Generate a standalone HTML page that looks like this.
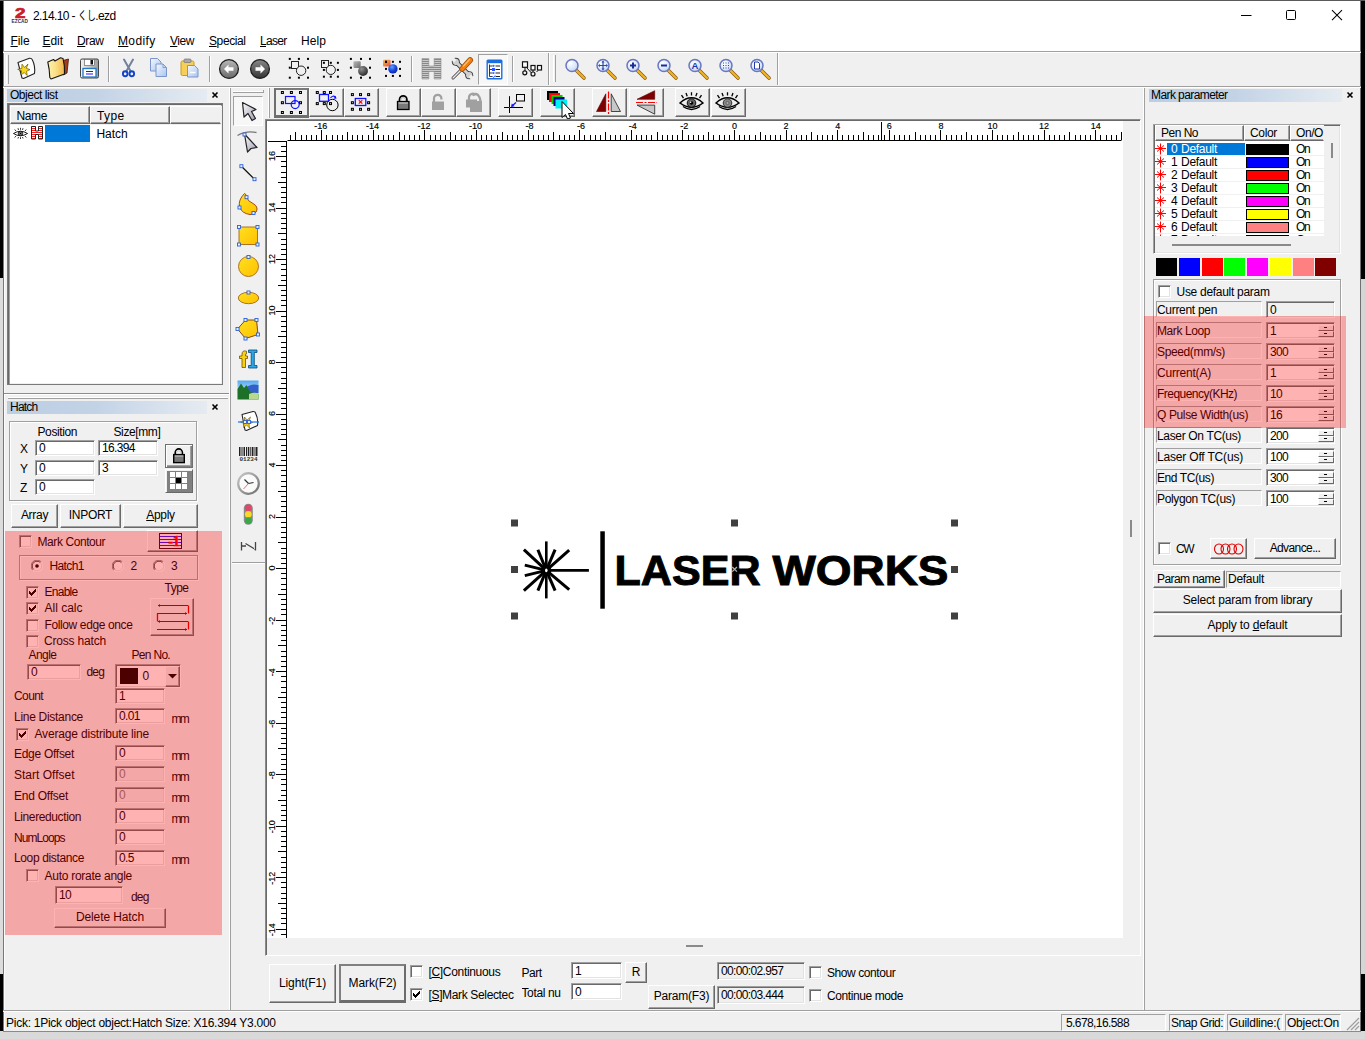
<!DOCTYPE html>
<html><head><meta charset="utf-8"><title>EZCAD</title>
<style>
html,body{margin:0;padding:0;}
body{width:1365px;height:1039px;position:relative;overflow:hidden;background:#f0f0f0;font-family:"Liberation Sans","Noto Sans CJK JP",sans-serif;font-size:12px;color:#000;}
div{position:absolute;box-sizing:border-box;}
.t{white-space:nowrap;line-height:16px;height:16px;}
.btn{background:#f0f0f0;border:1px solid;border-color:#fff #696969 #696969 #fff;box-shadow:inset -1px -1px 0 #a0a0a0;text-align:center;}
.btnp{background:#f0f0f0;border:1px solid;border-color:#696969 #fff #fff #696969;box-shadow:inset 1px 1px 0 #a0a0a0;text-align:center;}
.btnd{background:#f0f0f0;border:2px solid #808080;border-right-color:#6c6c6c;border-bottom:3px solid #6c6c6c;text-align:center;}
.btnd .bl{margin-top:-1px;}
.bl{display:block;white-space:nowrap;}
.ed{border:1px solid;border-color:#a0a0a0 #fff #fff #a0a0a0;box-shadow:inset 1px 1px 0 #696969, inset -1px -1px 0 #e3e3e3;overflow:hidden;white-space:nowrap;}
.ck{width:13px;height:13px;background:#fff;border:1px solid;border-color:#a0a0a0 #fff #fff #a0a0a0;box-shadow:inset 1px 1px 0 #696969, inset -1px -1px 0 #e3e3e3;}
.grp{border:1px solid #a0a0a0;box-shadow:1px 1px 0 #fff, inset 1px 1px 0 #fff;}
.sk{border:1px solid;border-color:#a0a0a0 #fff #fff #a0a0a0;}
.pink{background:rgba(255,0,0,0.3);}
u{text-decoration:underline;text-underline-offset:1px;}
</style></head><body>
<div style="left:0px;top:0px;width:3px;height:278px;background:#000"></div>
<div style="left:0px;top:278px;width:3px;height:696px;background:#dcdcdc"></div>
<div style="left:0px;top:974px;width:3px;height:57px;background:#000"></div>
<div style="left:1361px;top:0px;width:4px;height:279px;background:#000"></div>
<div style="left:1361px;top:279px;width:4px;height:695px;background:#d5d5d5"></div>
<div style="left:1361px;top:974px;width:4px;height:57px;background:#000"></div>
<div style="left:0px;top:1031px;width:1365px;height:8px;background:#d9d9d9"></div>
<div style="left:3px;top:1031px;width:1358px;height:1px;background:#8a8a8a"></div>
<div style="left:3px;top:0px;width:1358px;height:51px;background:#fff"></div>
<div style="left:0px;top:0px;width:1365px;height:1px;background:#5a5a5a"></div>
<div style="left:3px;top:1px;width:1px;height:1030px;background:#787878"></div>
<div style="left:4px;top:52px;width:1px;height:979px;background:#fbfbfb"></div>
<div style="left:1360px;top:1px;width:1px;height:1030px;background:#707070"></div>
<svg style="position:absolute;left:9px;top:5px;" width="22" height="20" viewBox="0 0 22 20"><text x="11.300" y="13" font-family="Liberation Sans" font-weight="bold" font-size="15" fill="#c8202c" stroke="#c8202c" stroke-width=".7" text-anchor="middle" textLength="10.500" lengthAdjust="spacingAndGlyphs">2</text>
<text x="10.800" y="18.300" font-family="Liberation Sans" font-weight="bold" font-size="5" fill="#3a2a4a" text-anchor="middle" textLength="16.500" lengthAdjust="spacingAndGlyphs">EZCAD</text></svg>
<div class="t" style="left:33px;top:7.500px;font-size:12px;letter-spacing:-0.6px">2.14.10 - <span style="display:inline-block;width:17.500px;letter-spacing:0;transform:scaleX(.74);transform-origin:0 50%;vertical-align:top">くし</span>.ezd</div>
<svg style="position:absolute;left:1240px;top:8px;" width="110" height="16" viewBox="0 0 110 16"><path d="M1 7.500h10.500" stroke="#000" stroke-width="1" fill="none"/>
<rect x="46.500" y="2.500" width="9" height="9" rx="1" stroke="#000" stroke-width="1" fill="none"/>
<path d="M92 2.200l10 10M102 2.200L92 12.200" stroke="#000" stroke-width="1.050" fill="none"/></svg>
<div class="t" style="left:10.5px;top:32.5px;letter-spacing:-0.086px"><u>F</u>ile</div>
<div class="t" style="left:42.5px;top:32.5px;letter-spacing:-0.043px"><u>E</u>dit</div>
<div class="t" style="left:77px;top:32.5px;letter-spacing:-0.379px"><u>D</u>raw</div>
<div class="t" style="left:118px;top:32.5px;letter-spacing:0.359px"><u>M</u>odify</div>
<div class="t" style="left:170px;top:32.5px;letter-spacing:-0.449px"><u>V</u>iew</div>
<div class="t" style="left:209px;top:32.5px;letter-spacing:-0.408px"><u>S</u>pecial</div>
<div class="t" style="left:260px;top:32.5px;letter-spacing:-0.703px"><u>L</u>aser</div>
<div class="t" style="left:301px;top:32.5px;letter-spacing:0.078px">Help</div>
<div style="left:3px;top:51px;width:1358px;height:1px;background:#a0a0a0"></div>
<div style="left:3px;top:52px;width:1358px;height:1px;background:#fff"></div>
<div style="left:3px;top:86px;width:1358px;height:1px;background:#a0a0a0"></div>
<div style="left:3px;top:87px;width:1358px;height:1px;background:#fff"></div>
<div style="left:6px;top:55px;width:3px;height:29px;border-left:1px solid #fff;border-right:1px solid #a0a0a0"></div>
<div style="left:108px;top:56px;width:1px;height:26px;background:#a0a0a0"></div>
<div style="left:109px;top:56px;width:1px;height:26px;background:#fff"></div>
<div style="left:209px;top:56px;width:1px;height:26px;background:#a0a0a0"></div>
<div style="left:210px;top:56px;width:1px;height:26px;background:#fff"></div>
<div style="left:411px;top:56px;width:1px;height:26px;background:#a0a0a0"></div>
<div style="left:412px;top:56px;width:1px;height:26px;background:#fff"></div>
<div style="left:512px;top:56px;width:1px;height:26px;background:#a0a0a0"></div>
<div style="left:513px;top:56px;width:1px;height:26px;background:#fff"></div>
<div style="left:548px;top:53px;width:1px;height:32px;background:#a0a0a0"></div>
<div style="left:549px;top:53px;width:1px;height:32px;background:#fff"></div>
<div style="left:553px;top:55px;width:3px;height:27px;border-left:1px solid #fff;border-right:1px solid #a0a0a0"></div>
<div style="left:777px;top:53px;width:1px;height:32px;background:#a0a0a0"></div>
<div style="left:778px;top:53px;width:1px;height:32px;background:#fff"></div>
<svg style="position:absolute;left:15px;top:56px;" width="24" height="25" viewBox="0 0 24 25"><defs><linearGradient id="gy" x1="0" y1="0" x2="1" y2="1"><stop offset="0" stop-color="#fff6a0"/><stop offset="1" stop-color="#e8b800"/></linearGradient></defs>
<path d="M3 6.500 L14.500 2.200 Q16.500 2 17.200 3.500 Q20.500 10 19.500 17.500 L8.500 22.500 L7 22 Z" fill="#fff" stroke="#222" stroke-width="1.100" stroke-linejoin="round"/>
<path d="M13 8 L11.300 12.300 L15 13.600 L11.500 15.300 L12.200 19.500 L9.200 16.500 L6 19 L6.600 14.800 L2.700 13.300 L6.800 12.400 L7 8.200 L9.600 11.500 Z" fill="#f8d818" stroke="#6b5400" stroke-width=".7"/></svg>
<svg style="position:absolute;left:46px;top:56px;" width="25" height="25" viewBox="0 0 25 25"><defs><linearGradient id="gf" x1="0" y1="0" x2="1" y2="0"><stop offset="0" stop-color="#fff3a8"/><stop offset=".45" stop-color="#fbe08a"/><stop offset="1" stop-color="#f3b544"/></linearGradient></defs>
<path d="M17 4.500 L22.500 3 L21 17 L17.500 19Z" fill="#a83c18" stroke="#3a1808" stroke-width=".8"/>
<path d="M1.800 6 L7.500 3.500 L9 5 L14.500 1.800 L17 2.500 Q19 10 18.500 18 L5 23 L3.800 21.500 Q3.500 13 1.800 6Z" fill="url(#gf)" stroke="#151515" stroke-width="1.100" stroke-linejoin="round"/></svg>
<svg style="position:absolute;left:79px;top:57px;" width="22" height="22" viewBox="0 0 22 22"><defs><linearGradient id="gs" x1="0" y1="0" x2="1" y2="0"><stop offset="0" stop-color="#f4f4f4"/><stop offset="1" stop-color="#9a9a9a"/></linearGradient></defs>
<rect x="1.500" y="2" width="18" height="19" rx="1.500" fill="url(#gs)" stroke="#444" stroke-width="1"/>
<rect x="5.500" y="2.500" width="10" height="6" fill="#fff" stroke="#555" stroke-width=".6"/><rect x="11.500" y="3" width="2.500" height="4.500" fill="#111"/>
<rect x="4" y="11.500" width="13" height="8.500" fill="#fff" stroke="#1c78c8" stroke-width="1.300"/><path d="M7 14.500h7M7 17h7" stroke="#2a10ff" stroke-width="1.200"/></svg>
<svg style="position:absolute;left:120px;top:58px;" width="17" height="20" viewBox="0 0 17 20"><path d="M4 1.500 L10.800 13.500M13 1.500 L6.200 13.500" stroke="#70829c" stroke-width="2" stroke-linecap="round"/>
<ellipse cx="5.200" cy="15.800" rx="2.300" ry="2.500" fill="none" stroke="#1444c8" stroke-width="1.900"/><ellipse cx="11.800" cy="15.800" rx="2.300" ry="2.500" fill="none" stroke="#1444c8" stroke-width="1.900"/></svg>
<svg style="position:absolute;left:149px;top:57px;" width="20" height="21" viewBox="0 0 20 21"><defs><linearGradient id="gc" x1="0" y1="0" x2="1" y2="1"><stop offset="0" stop-color="#f4f8ff"/><stop offset="1" stop-color="#a8c4f0"/></linearGradient></defs>
<path d="M1.500 1.500h7l3.500 3.500v9h-10.500z" fill="url(#gc)" stroke="#7c96cc" stroke-width="1"/>
<path d="M7 7h7l3.500 3.500v9h-10.500z" fill="url(#gc)" stroke="#7c96cc" stroke-width="1"/><path d="M14 7v3.500h3.500" fill="none" stroke="#7c96cc" stroke-width=".9"/></svg>
<svg style="position:absolute;left:180px;top:57px;" width="20" height="21" viewBox="0 0 20 21"><rect x="1" y="4" width="13" height="14.500" rx="1.500" fill="#f5cf58" stroke="#c89a20" stroke-width="1"/><rect x="4" y="2" width="7" height="3.500" rx="1" fill="#a8a8a8" stroke="#777" stroke-width=".7"/>
<path d="M7.500 8.500h7l3.500 3.500v8h-10.500z" fill="url(#gc)" stroke="#7c96cc" stroke-width="1"/><path d="M10 15.500h5.500" stroke="#fff" stroke-width="1.400"/></svg>
<svg style="position:absolute;left:218px;top:57.5px;" width="22" height="22" viewBox="0 0 22 22"><defs><linearGradient id="gb0" x1="0" y1="0" x2="0" y2="1"><stop offset="0" stop-color="#b8b8b8"/><stop offset="1" stop-color="#6a6a6a"/></linearGradient></defs>
<circle cx="11" cy="11" r="9.400" fill="url(#gb0)" stroke="#1e1e1e" stroke-width="1.300"/><path d="M6 11 L10.500 6.500 V9.300 H15.500 V12.700 H10.500 V15.500 Z" fill="#fff"/></svg>
<svg style="position:absolute;left:249px;top:57.5px;" width="22" height="22" viewBox="0 0 22 22"><defs><linearGradient id="gb1" x1="0" y1="0" x2="0" y2="1"><stop offset="0" stop-color="#8a8a8a"/><stop offset="1" stop-color="#333"/></linearGradient></defs>
<circle cx="11" cy="11" r="9.400" fill="url(#gb1)" stroke="#1e1e1e" stroke-width="1.300"/><path d="M16 11 L11.500 6.500 V9.300 H6.500 V12.700 H11.500 V15.500 Z" fill="#fff"/></svg>
<svg style="position:absolute;left:286px;top:56px;" width="26" height="25" viewBox="0 0 26 25"><rect x="2.8" y="1.9" width="2" height="2" fill="#000"/><rect x="2.8" y="10.7" width="2" height="2" fill="#000"/><rect x="2.8" y="20.7" width="2" height="2" fill="#000"/><rect x="11.9" y="1.9" width="2" height="2" fill="#000"/><rect x="11.9" y="20.7" width="2" height="2" fill="#000"/><rect x="21.0" y="1.9" width="2" height="2" fill="#000"/><rect x="21.0" y="10.7" width="2" height="2" fill="#000"/><rect x="21.0" y="20.7" width="2" height="2" fill="#000"/><rect x="5.500" y="5.500" width="7" height="7" fill="none" stroke="#222" stroke-width="1"/><circle cx="15.100" cy="14.700" r="4.700" fill="#f0f0f0" stroke="#222" stroke-width="1"/></svg>
<svg style="position:absolute;left:318px;top:56px;" width="26" height="25" viewBox="0 0 26 25"><rect x="3.500" y="4.500" width="7" height="7" fill="none" stroke="#222" stroke-width="1"/><rect x="4.9" y="5.8" width="2" height="2" fill="#000"/><rect x="4.9" y="12.9" width="2" height="2" fill="#000"/><rect x="4.9" y="19.7" width="2" height="2" fill="#000"/><rect x="11.8" y="5.8" width="2" height="2" fill="#000"/><rect x="11.8" y="19.7" width="2" height="2" fill="#000"/><rect x="18.9" y="5.8" width="2" height="2" fill="#000"/><rect x="18.9" y="12.9" width="2" height="2" fill="#000"/><rect x="18.9" y="19.7" width="2" height="2" fill="#000"/><circle cx="12.800" cy="13.900" r="4.600" fill="#f0f0f0" stroke="#222" stroke-width="1"/></svg>
<svg style="position:absolute;left:348px;top:56px;" width="26" height="25" viewBox="0 0 26 25"><defs><radialGradient id="gk" cx=".35" cy=".3" r=".8"><stop offset="0" stop-color="#909090"/><stop offset="1" stop-color="#222"/></radialGradient><linearGradient id="gq" x1="0" y1="0" x2="1" y2="1"><stop offset="0" stop-color="#b8b8b8"/><stop offset="1" stop-color="#6a6a6a"/></linearGradient></defs><rect x="1.9" y="1.9" width="2" height="2" fill="#000"/><rect x="1.9" y="10.7" width="2" height="2" fill="#000"/><rect x="1.9" y="20.7" width="2" height="2" fill="#000"/><rect x="12.0" y="1.9" width="2" height="2" fill="#000"/><rect x="12.0" y="20.7" width="2" height="2" fill="#000"/><rect x="21.0" y="1.9" width="2" height="2" fill="#000"/><rect x="21.0" y="10.7" width="2" height="2" fill="#000"/><rect x="21.0" y="20.7" width="2" height="2" fill="#000"/><rect x="5.500" y="5.300" width="7.200" height="6.800" rx="1" fill="url(#gq)"/><circle cx="15" cy="15" r="4.900" fill="url(#gk)"/></svg>
<svg style="position:absolute;left:380px;top:56px;" width="26" height="25" viewBox="0 0 26 25"><defs><radialGradient id="gbl" cx=".4" cy=".3" r=".8"><stop offset="0" stop-color="#6aa0ff"/><stop offset=".5" stop-color="#1848e0"/><stop offset="1" stop-color="#0a1c90"/></radialGradient><linearGradient id="go" x1="0" y1="0" x2="1" y2="1"><stop offset="0" stop-color="#f8c040"/><stop offset="1" stop-color="#e04848"/></linearGradient></defs><rect x="3" y="3.800" width="7.600" height="6.800" rx="1" fill="url(#go)"/><rect x="5.0" y="4.8" width="2" height="2" fill="#000"/><rect x="5.0" y="11.9" width="2" height="2" fill="#000"/><rect x="5.0" y="18.9" width="2" height="2" fill="#000"/><rect x="11.9" y="4.8" width="2" height="2" fill="#000"/><rect x="11.9" y="18.9" width="2" height="2" fill="#000"/><rect x="19.0" y="4.8" width="2" height="2" fill="#000"/><rect x="19.0" y="11.9" width="2" height="2" fill="#000"/><rect x="19.0" y="18.9" width="2" height="2" fill="#000"/><rect x="5" y="4.800" width="2" height="2" fill="#000"/><circle cx="12.900" cy="12.900" r="4.700" fill="url(#gbl)"/></svg>
<svg style="position:absolute;left:421px;top:57px;" width="22" height="23" viewBox="0 0 22 23"><defs><pattern id="hg" width="3" height="2" patternUnits="userSpaceOnUse"><rect width="3" height="1.200" fill="#888"/><rect y="1.200" width="3" height=".8" fill="#c4c4c4"/></pattern></defs>
<path d="M1 1.500h6.800v7.500h5.400v-7.500h6.800v20.500h-6.800v-7.500h-5.400v7.500h-6.800z" fill="url(#hg)" stroke="#8c8c8c" stroke-width=".6"/></svg>
<svg style="position:absolute;left:450px;top:56px;" width="25" height="25" viewBox="0 0 25 25"><path d="M6.500 6.500 L18.500 18.500" stroke="#3a3a3a" stroke-width="4.600" stroke-linecap="round"/>
<circle cx="5.800" cy="5.800" r="4" fill="#3a3a3a"/><circle cx="19.200" cy="19.200" r="4" fill="#3a3a3a"/>
<path d="M6.500 6.500 L18.500 18.500" stroke="#cfcfcf" stroke-width="3" stroke-linecap="round"/>
<circle cx="5.800" cy="5.800" r="3.100" fill="#cfcfcf"/><circle cx="19.200" cy="19.200" r="3.100" fill="#cfcfcf"/>
<path d="M1 1 L5.200 5.200" stroke="#f0f0f0" stroke-width="3.400"/><path d="M24 24 L19.800 19.800" stroke="#f0f0f0" stroke-width="3.400"/>
<path d="M3 22 L12.500 12.500" stroke="#333" stroke-width="3" stroke-linecap="round"/><path d="M3 22 L12.500 12.500" stroke="#e8e8e8" stroke-width="1.600" stroke-linecap="round"/>
<path d="M12.200 12.800 L20.200 4" stroke="#a04800" stroke-width="5.600" stroke-linecap="round"/><path d="M12.200 12.800 L20.200 4" stroke="#f08010" stroke-width="4.200" stroke-linecap="round"/><path d="M13.500 10 L19.500 3.500" stroke="#ffc070" stroke-width="1.200" stroke-linecap="round"/></svg>
<div style="left:478px;top:54px;width:30px;height:31px;background:#f8f8f8;border:1px solid;border-color:#a0a0a0 #fff #fff #a0a0a0"></div>
<svg style="position:absolute;left:486px;top:59px;" width="18" height="21" viewBox="0 0 18 21"><rect x="1.200" y="1.200" width="14.600" height="18.600" rx=".8" fill="#fff" stroke="#1a6ee0" stroke-width="1.400"/><rect x="1.200" y="1.200" width="14.600" height="3" fill="#1a6ee0"/>
<path d="M3.500 5.500V17.500M3.500 7h3M3.500 10.500h3M3.500 14h3M3.500 17.500h3" stroke="#222" stroke-width=".9" fill="none"/><path d="M9.500 7h4.500M9.500 10.500h4.500M9.500 14h4.500M9.500 17.500h4.500" stroke="#222" stroke-width="1.100"/>
<rect x="6" y="9" width="3" height="3" fill="#2a50ff"/><circle cx="7.500" cy="6.800" r="1.100" fill="#2a70ff"/><circle cx="7.500" cy="14" r="1.100" fill="#2a70ff"/><path d="M6.500 17.500l1.200 1 1.500-2" stroke="#2a50ff" stroke-width=".9" fill="none"/></svg>
<svg style="position:absolute;left:520px;top:59px;" width="23" height="19" viewBox="0 0 23 19"><g fill="#fff" stroke="#111" stroke-width="1.200"><rect x="2.500" y="2.800" width="5" height="5.500"/><rect x="11" y="6.500" width="4" height="4.500"/><rect x="17.500" y="6.500" width="4" height="4.500"/></g>
<path d="M5 8.500V12M6.500 8.500L11.500 14M13 11V13M18 11.500L16.500 13" stroke="#111" stroke-width="1"/><circle cx="4.800" cy="13.800" r="2" fill="none" stroke="#111" stroke-width="1.200"/><circle cx="13" cy="15" r="2" fill="none" stroke="#111" stroke-width="1.200"/></svg>
<svg style="position:absolute;left:562px;top:57px;" width="26" height="24" viewBox="0 0 26 24"><defs><radialGradient id="gl" cx=".35" cy=".3" r=".9"><stop offset="0" stop-color="#fff"/><stop offset=".6" stop-color="#d8e4fa"/><stop offset="1" stop-color="#a8bcf0"/></radialGradient></defs>
<path d="M14.500 13.500 L22 21" stroke="#8a5a10" stroke-width="3.600" stroke-linecap="round"/><path d="M14.500 13.500 L22 21" stroke="#f0b428" stroke-width="2.200" stroke-linecap="round"/>
<circle cx="10" cy="8.500" r="6" fill="url(#gl)" stroke="#6878c0" stroke-width="1.500"/></svg>
<svg style="position:absolute;left:593px;top:57px;" width="26" height="24" viewBox="0 0 26 24"><defs><radialGradient id="gl" cx=".35" cy=".3" r=".9"><stop offset="0" stop-color="#fff"/><stop offset=".6" stop-color="#d8e4fa"/><stop offset="1" stop-color="#a8bcf0"/></radialGradient></defs>
<path d="M14.500 13.500 L22 21" stroke="#8a5a10" stroke-width="3.600" stroke-linecap="round"/><path d="M14.500 13.500 L22 21" stroke="#f0b428" stroke-width="2.200" stroke-linecap="round"/>
<circle cx="10" cy="8.500" r="6" fill="url(#gl)" stroke="#6878c0" stroke-width="1.500"/><path d="M10 4.500v8M6 8.500h8" stroke="#3048a8" stroke-width="1.200"/><path d="M10 3.500l-1.500 2h3zM10 13.500l-1.500-2h3zM5 8.500l2-1.500v3zM15 8.500l-2-1.500v3z" fill="#3048a8"/></svg>
<svg style="position:absolute;left:623px;top:57px;" width="26" height="24" viewBox="0 0 26 24"><defs><radialGradient id="gl" cx=".35" cy=".3" r=".9"><stop offset="0" stop-color="#fff"/><stop offset=".6" stop-color="#d8e4fa"/><stop offset="1" stop-color="#a8bcf0"/></radialGradient></defs>
<path d="M14.500 13.500 L22 21" stroke="#8a5a10" stroke-width="3.600" stroke-linecap="round"/><path d="M14.500 13.500 L22 21" stroke="#f0b428" stroke-width="2.200" stroke-linecap="round"/>
<circle cx="10" cy="8.500" r="6" fill="url(#gl)" stroke="#6878c0" stroke-width="1.500"/><path d="M10 5.500v6M7 8.500h6" stroke="#1c2c98" stroke-width="2"/></svg>
<svg style="position:absolute;left:654px;top:57px;" width="26" height="24" viewBox="0 0 26 24"><defs><radialGradient id="gl" cx=".35" cy=".3" r=".9"><stop offset="0" stop-color="#fff"/><stop offset=".6" stop-color="#d8e4fa"/><stop offset="1" stop-color="#a8bcf0"/></radialGradient></defs>
<path d="M14.500 13.500 L22 21" stroke="#8a5a10" stroke-width="3.600" stroke-linecap="round"/><path d="M14.500 13.500 L22 21" stroke="#f0b428" stroke-width="2.200" stroke-linecap="round"/>
<circle cx="10" cy="8.500" r="6" fill="url(#gl)" stroke="#6878c0" stroke-width="1.500"/><path d="M7 8.500h6" stroke="#1c2c98" stroke-width="2"/></svg>
<svg style="position:absolute;left:685px;top:57px;" width="26" height="24" viewBox="0 0 26 24"><defs><radialGradient id="gl" cx=".35" cy=".3" r=".9"><stop offset="0" stop-color="#fff"/><stop offset=".6" stop-color="#d8e4fa"/><stop offset="1" stop-color="#a8bcf0"/></radialGradient></defs>
<path d="M14.500 13.500 L22 21" stroke="#8a5a10" stroke-width="3.600" stroke-linecap="round"/><path d="M14.500 13.500 L22 21" stroke="#f0b428" stroke-width="2.200" stroke-linecap="round"/>
<circle cx="10" cy="8.500" r="6" fill="url(#gl)" stroke="#6878c0" stroke-width="1.500"/><text x="10" y="12" font-family="Liberation Sans" font-weight="bold" font-size="9.500" text-anchor="middle" fill="#2038a8">A</text></svg>
<svg style="position:absolute;left:716px;top:57px;" width="26" height="24" viewBox="0 0 26 24"><defs><radialGradient id="gl" cx=".35" cy=".3" r=".9"><stop offset="0" stop-color="#fff"/><stop offset=".6" stop-color="#d8e4fa"/><stop offset="1" stop-color="#a8bcf0"/></radialGradient></defs>
<path d="M14.500 13.500 L22 21" stroke="#8a5a10" stroke-width="3.600" stroke-linecap="round"/><path d="M14.500 13.500 L22 21" stroke="#f0b428" stroke-width="2.200" stroke-linecap="round"/>
<circle cx="10" cy="8.500" r="6" fill="url(#gl)" stroke="#6878c0" stroke-width="1.500"/><path d="M7 6h1M9.500 6h1M12 6h1M7 8.500h1M9.500 8.500h1M12 8.500h1M7 11h1M9.500 11h1M12 11h1" stroke="#3048a8" stroke-width="1"/></svg>
<svg style="position:absolute;left:747px;top:57px;" width="26" height="24" viewBox="0 0 26 24"><defs><radialGradient id="gl" cx=".35" cy=".3" r=".9"><stop offset="0" stop-color="#fff"/><stop offset=".6" stop-color="#d8e4fa"/><stop offset="1" stop-color="#a8bcf0"/></radialGradient></defs>
<path d="M14.500 13.500 L22 21" stroke="#8a5a10" stroke-width="3.600" stroke-linecap="round"/><path d="M14.500 13.500 L22 21" stroke="#f0b428" stroke-width="2.200" stroke-linecap="round"/>
<circle cx="10" cy="8.500" r="6" fill="url(#gl)" stroke="#6878c0" stroke-width="1.500"/><path d="M7.500 5h3.500l1.500 1.500v5.500h-5z" fill="#fff" stroke="#2038a8" stroke-width="1"/></svg>
<div style="left:7px;top:89px;width:200px;height:13px;background:linear-gradient(90deg,#bccee4 0%,#c3d3e6 45%,#d9e3ee 80%,#e6ebf1 100%)"></div>
<div class="t" style="left:10px;top:87.2px;font-size:12px;letter-spacing:-0.47px;">Object list</div>
<svg style="position:absolute;left:211px;top:91px;" width="9" height="9" viewBox="0 0 9 9"><path d="M1.5 1.5l5 5M6.5 1.5l-5 5" stroke="#000" stroke-width="1.6" fill="none"/></svg>
<div style="left:7px;top:103px;width:216px;height:282px;background:#fff;border:1px solid #7a7a7a;box-shadow:inset 1px 1px 0 #696969, inset 2px 2px 0 #a0a0a0, inset -1px -1px 0 #f0f0f0"></div>
<div style="left:10px;top:105px;width:211px;height:20px;background:#f0f0f0"></div>
<div style="left:10px;top:106px;width:80px;height:18px;background:#f0f0f0;border:1px solid;border-color:#fff #696969 #696969 #fff;box-shadow:inset -1px -1px 0 #a0a0a0"></div>
<div class="t" style="left:16.5px;top:107.5px;font-size:12px;letter-spacing:-0.379px;">Name</div>
<div style="left:90px;top:106px;width:80px;height:18px;background:#f0f0f0;border:1px solid;border-color:#fff #696969 #696969 #fff;box-shadow:inset -1px -1px 0 #a0a0a0"></div>
<div class="t" style="left:97px;top:107.5px;font-size:12px;letter-spacing:0.371px;">Type</div>
<div style="left:170px;top:106px;width:51px;height:18px;background:#f0f0f0;border:1px solid;border-color:#fff #f0f0f0 #696969 #fff;box-shadow:inset 0 -1px 0 #a0a0a0"></div>
<div style="left:45px;top:125px;width:45px;height:17px;background:#0078d7"></div>
<div class="t" style="left:96.5px;top:125.5px;font-size:12px;letter-spacing:-0.069px;">Hatch</div>
<svg style="position:absolute;left:12px;top:127px;" width="17" height="13" viewBox="0 0 17 13"><path d="M1.500 6.500 Q8.500 2 15.500 6.500 Q8.500 11 1.500 6.500Z" fill="#fff" stroke="#000" stroke-width=".9"/><circle cx="8.500" cy="6.500" r="2.200" fill="#777" stroke="#000" stroke-width=".8"/><circle cx="8.500" cy="6.500" r=".7" fill="#000"/>
<path d="M4 4l-1.300-1.500M6.500 3l-.5-1.800M8.500 2.800V.8M10.500 3l.5-1.800M13 4l1.300-1.500M4 9l-1.300 1.500M6.500 10l-.5 1.500M8.500 10.200V12M10.500 10l.5 1.500M13 9l1.300 1.500" stroke="#000" stroke-width=".8"/></svg>
<svg style="position:absolute;left:31px;top:126px;" width="13" height="14" viewBox="0 0 13 14"><defs><pattern id="hp" width="2" height="2" patternUnits="userSpaceOnUse"><rect width="2" height="1" fill="#f02020"/><rect y="1" width="2" height="1" fill="#fff"/></pattern></defs>
<path d="M.5 .5h4v4.500h3v-4.500h4v12.500h-4v-4.500h-3v4.500h-4z" fill="url(#hp)" stroke="#222" stroke-width="1"/></svg>
<div style="left:4px;top:393px;width:225px;height:1px;background:#8c8c8c"></div>
<div style="left:4px;top:394px;width:225px;height:1px;background:#fff"></div>
<div style="left:8px;top:397px;width:220px;height:1px;background:#fff"></div>
<div style="left:8px;top:398px;width:220px;height:1px;background:#a0a0a0"></div>
<div style="left:229px;top:88px;width:1px;height:922px;background:#fff"></div>
<div style="left:230px;top:88px;width:1px;height:922px;background:#a0a0a0"></div>
<div style="left:7px;top:401px;width:200px;height:13px;background:linear-gradient(90deg,#bccee4 0%,#c3d3e6 45%,#d9e3ee 80%,#e6ebf1 100%)"></div>
<div class="t" style="left:10px;top:399.2px;font-size:12px;letter-spacing:-0.769px;">Hatch</div>
<svg style="position:absolute;left:211px;top:403px;" width="9" height="9" viewBox="0 0 9 9"><path d="M1.5 1.5l5 5M6.5 1.5l-5 5" stroke="#000" stroke-width="1.6" fill="none"/></svg>
<div class="grp" style="left:9px;top:421px;width:188px;height:80px;"></div>
<div class="t" style="left:37.5px;top:424px;font-size:12px;letter-spacing:-0.386px;">Position</div>
<div class="t" style="left:113.5px;top:424px;font-size:12px;letter-spacing:-0.388px;">Size[mm]</div>
<div class="t" style="left:20px;top:441px;font-size:12px;letter-spacing:-0.3px;">X</div>
<div class="t" style="left:20px;top:460.5px;font-size:12px;letter-spacing:-0.3px;">Y</div>
<div class="t" style="left:20px;top:479.5px;font-size:12px;letter-spacing:-0.3px;">Z</div>
<div class="ed" style="left:35px;top:440px;width:60px;height:16px;background:#fff;"><span style="position:absolute;left:3px;top:0;line-height:15px;letter-spacing:-0.65px;color:#000">0</span></div>
<div class="ed" style="left:98px;top:440px;width:60px;height:16px;background:#fff;"><span style="position:absolute;left:3px;top:0;line-height:15px;letter-spacing:-0.65px;color:#000">16.394</span></div>
<div class="ed" style="left:35px;top:460px;width:60px;height:16px;background:#fff;"><span style="position:absolute;left:3px;top:0;line-height:15px;letter-spacing:-0.65px;color:#000">0</span></div>
<div class="ed" style="left:98px;top:460px;width:60px;height:16px;background:#fff;"><span style="position:absolute;left:3px;top:0;line-height:15px;letter-spacing:-0.65px;color:#000">3</span></div>
<div class="ed" style="left:35px;top:479px;width:60px;height:16px;background:#fff;"><span style="position:absolute;left:3px;top:0;line-height:15px;letter-spacing:-0.65px;color:#000">0</span></div>
<div style="left:165px;top:444px;width:28px;height:24px;background:#f0f0f0;border:1px solid #707070;box-shadow:inset 1px 1px 0 #fff, inset -1px -1px 0 #808080, inset -2px -2px 0 #a0a0a0"></div>
<svg style="position:absolute;left:172px;top:447px;" width="14" height="17" viewBox="0 0 14 17"><path d="M3.200 8V5.500a3.600 3.600 0 0 1 7.200 0V8" fill="none" stroke="#000" stroke-width="1.600"/><path d="M4.600 8V6a2.200 2.200 0 0 1 4.400 0V8" fill="none" stroke="#bbb" stroke-width=".8"/><rect x="1.700" y="7.600" width="10.600" height="8" fill="#787878" stroke="#000" stroke-width="1.400"/><path d="M2.800 9h8.500" stroke="#ddd" stroke-width=".8"/></svg>
<div style="left:165px;top:469px;width:28px;height:24px;background:#808080;border:1px solid;border-color:#fff #696969 #696969 #fff;box-shadow:inset 1px 1px 0 #f0f0f0"></div>
<svg style="position:absolute;left:170px;top:472px;" width="17" height="17" viewBox="0 0 17 17"><g fill="#fff" shape-rendering="crispEdges"><rect x="0" y="0" width="5" height="5"/><rect x="6" y="0" width="5" height="5"/><rect x="12" y="0" width="5" height="5"/><rect x="0" y="6" width="5" height="5"/><rect x="12" y="6" width="5" height="5"/><rect x="0" y="12" width="5" height="5"/><rect x="6" y="12" width="5" height="5"/><rect x="12" y="12" width="5" height="5"/></g><rect x="6" y="6" width="5" height="5" fill="#000" shape-rendering="crispEdges"/></svg>
<div class="btn" style="left:11px;top:504px;width:47px;height:24px;"><span class="bl" style="line-height:21px;letter-spacing:-0.3px">Array</span></div>
<div class="btn" style="left:60px;top:504px;width:61px;height:24px;"><span class="bl" style="line-height:21px;letter-spacing:-0.3px">INPORT</span></div>
<div class="btn" style="left:123px;top:504px;width:75px;height:24px;"><span class="bl" style="line-height:21px;letter-spacing:-0.3px"><u>A</u>pply</span></div>
<div class="ck" style="left:19px;top:535px"></div>
<div class="t" style="left:37.5px;top:533.5px;font-size:12px;letter-spacing:-0.416px;">Mark Contour</div>
<div class="btn" style="left:147px;top:530px;width:51px;height:22px;"><svg width="24" height="16" style="position:absolute;left:11px;top:2px" viewBox="0 0 24 16"><rect x=".5" y=".5" width="22" height="15" fill="#fff6f6" stroke="#400018" stroke-width="1"/><path d="M1 3.500h21M1 6.500h21M1 9.500h21M1 12.500h21" stroke="#2a10ff" stroke-width="1"/><text x="15" y="13" font-family="Liberation Serif" font-weight="bold" font-size="14" fill="#f00" stroke="#f00" stroke-width=".5" text-anchor="middle">-1</text></svg></div>
<div class="grp" style="left:19px;top:555px;width:179px;height:25px;"></div>
<svg style="position:absolute;left:31px;top:560px;" width="12" height="12" viewBox="0 0 12 12"><circle cx="6" cy="6" r="5.500" fill="#fff"/><path d="M1.800 10.200A5.500 5.500 0 0 1 10.200 1.800" fill="none" stroke="#808080" stroke-width="1"/><path d="M2.600 9.400A4.500 4.500 0 0 1 9.400 2.600" fill="none" stroke="#404040" stroke-width="1"/><path d="M10.200 1.800A5.500 5.500 0 0 1 1.800 10.200" fill="none" stroke="#fff" stroke-width="1"/><path d="M9.400 2.600A4.500 4.500 0 0 1 2.600 9.400" fill="none" stroke="#e3e3e3" stroke-width="1"/><circle cx="6" cy="6" r="1.800" fill="#000"/></svg>
<div class="t" style="left:49.5px;top:558px;font-size:12px;letter-spacing:-0.619px;">Hatch1</div>
<svg style="position:absolute;left:112px;top:560px;" width="12" height="12" viewBox="0 0 12 12"><circle cx="6" cy="6" r="5.500" fill="#fff"/><path d="M1.800 10.200A5.500 5.500 0 0 1 10.200 1.800" fill="none" stroke="#808080" stroke-width="1"/><path d="M2.600 9.400A4.500 4.500 0 0 1 9.400 2.600" fill="none" stroke="#404040" stroke-width="1"/><path d="M10.200 1.800A5.500 5.500 0 0 1 1.800 10.200" fill="none" stroke="#fff" stroke-width="1"/><path d="M9.400 2.600A4.500 4.500 0 0 1 2.600 9.400" fill="none" stroke="#e3e3e3" stroke-width="1"/></svg>
<div class="t" style="left:130.5px;top:558px;font-size:12px;letter-spacing:-0.3px;">2</div>
<svg style="position:absolute;left:152.5px;top:560px;" width="12" height="12" viewBox="0 0 12 12"><circle cx="6" cy="6" r="5.500" fill="#fff"/><path d="M1.800 10.200A5.500 5.500 0 0 1 10.200 1.800" fill="none" stroke="#808080" stroke-width="1"/><path d="M2.600 9.400A4.500 4.500 0 0 1 9.400 2.600" fill="none" stroke="#404040" stroke-width="1"/><path d="M10.200 1.800A5.500 5.500 0 0 1 1.800 10.200" fill="none" stroke="#fff" stroke-width="1"/><path d="M9.400 2.600A4.500 4.500 0 0 1 2.600 9.400" fill="none" stroke="#e3e3e3" stroke-width="1"/></svg>
<div class="t" style="left:171px;top:558px;font-size:12px;letter-spacing:-0.3px;">3</div>
<div class="ck" style="left:26px;top:586px"><svg width="13" height="13" style="position:absolute;left:-1px;top:-1px" shape-rendering="crispEdges"><path d="M3 5h1v3h-1zM4 6h1v3h-1zM5 7h1v3h-1zM6 6h1v3h-1zM7 5h1v3h-1zM8 4h1v3h-1zM9 3h1v3h-1z" fill="#000"/></svg></div>
<div class="t" style="left:44.5px;top:584px;font-size:12px;letter-spacing:-0.727px;">Enable</div>
<div class="ck" style="left:26px;top:602px"><svg width="13" height="13" style="position:absolute;left:-1px;top:-1px" shape-rendering="crispEdges"><path d="M3 5h1v3h-1zM4 6h1v3h-1zM5 7h1v3h-1zM6 6h1v3h-1zM7 5h1v3h-1zM8 4h1v3h-1zM9 3h1v3h-1z" fill="#000"/></svg></div>
<div class="t" style="left:44.5px;top:599.7px;font-size:12px;letter-spacing:-0.002px;">All calc</div>
<div class="ck" style="left:26px;top:619px"></div>
<div class="t" style="left:44.5px;top:617px;font-size:12px;letter-spacing:-0.378px;">Follow edge once</div>
<div class="ck" style="left:26px;top:635px"></div>
<div class="t" style="left:44px;top:633px;font-size:12px;letter-spacing:-0.183px;">Cross hatch</div>
<div class="t" style="left:164.5px;top:580px;font-size:12px;letter-spacing:-0.504px;">Type</div>
<div class="btn" style="left:150px;top:598px;width:44px;height:38px;"><svg width="34" height="28" style="position:absolute;left:5px;top:5px" viewBox="0 0 34 28"><path d="M2 3h30M1 11h30M2 19h30M1 27h30" stroke="#2a10ff" stroke-width="1" transform="translate(0,-1.500)"/><path d="M32.500 1.500v8M1.500 9.500v8M32.500 17.500v8" stroke="#e00000" stroke-width="1.300"/><path d="M2 1.500l2-1.500v3zM31 9.500l-2-1.500v3zM2 17.500l2-1.500v3zM31 25.500l-2-1.500v3z" fill="#2a10ff"/></svg></div>
<div class="t" style="left:28.5px;top:646.5px;font-size:12px;letter-spacing:-0.537px;">Angle</div>
<div class="t" style="left:131.5px;top:646.5px;font-size:12px;letter-spacing:-0.692px;">Pen No.</div>
<div class="ed" style="left:27px;top:664px;width:54px;height:16px;background:#fff;"><span style="position:absolute;left:3px;top:0;line-height:15px;letter-spacing:-0.65px;color:#000">0</span></div>
<div class="t" style="left:86.5px;top:664px;font-size:12px;letter-spacing:-0.839px;">deg</div>
<div style="left:115px;top:664px;width:66px;height:24px;background:#fff;border:1px solid;border-color:#a0a0a0 #fff #fff #a0a0a0;box-shadow:inset 1px 1px 0 #696969, inset -1px -1px 0 #e3e3e3"></div>
<div style="left:120px;top:668px;width:18px;height:16px;background:#000"></div>
<div class="t" style="left:142.5px;top:668px;font-size:12px;letter-spacing:-0.3px;">0</div>
<div class="btn" style="left:165px;top:666px;width:15px;height:21px;"><svg width="9" height="5" style="position:absolute;left:2px;top:7px"><path d="M0 0h9l-4.500 4.500z" fill="#000"/></svg></div>
<div class="t" style="left:14px;top:687.5px;font-size:12px;letter-spacing:-0.603px;">Count</div>
<div class="ed" style="left:115px;top:688px;width:50px;height:16px;background:#fff;"><span style="position:absolute;left:3px;top:0;line-height:15px;letter-spacing:-0.65px;color:#000">1</span></div>
<div class="t" style="left:14px;top:709px;font-size:12px;letter-spacing:-0.285px;">Line Distance</div>
<div class="ed" style="left:115px;top:708px;width:50px;height:16px;background:#fff;"><span style="position:absolute;left:3px;top:0;line-height:15px;letter-spacing:-0.65px;color:#000">0.01</span></div>
<div class="t" style="left:171.5px;top:711px;font-size:12px;letter-spacing:-1.75px;">mm</div>
<div class="t" style="left:14px;top:746px;font-size:12px;letter-spacing:-0.283px;">Edge Offset</div>
<div class="ed" style="left:115px;top:745px;width:50px;height:16px;background:#fff;"><span style="position:absolute;left:3px;top:0;line-height:15px;letter-spacing:-0.65px;color:#000">0</span></div>
<div class="t" style="left:171.5px;top:748px;font-size:12px;letter-spacing:-1.75px;">mm</div>
<div class="t" style="left:14px;top:767px;font-size:12px;letter-spacing:0.007px;">Start Offset</div>
<div class="ed" style="left:115px;top:766px;width:50px;height:16px;background:#f0f0f0;"><span style="position:absolute;left:3px;top:0;line-height:15px;letter-spacing:-0.65px;color:#808080">0</span></div>
<div class="t" style="left:171.5px;top:769px;font-size:12px;letter-spacing:-1.75px;">mm</div>
<div class="t" style="left:14px;top:788px;font-size:12px;letter-spacing:-0.244px;">End Offset</div>
<div class="ed" style="left:115px;top:787px;width:50px;height:16px;background:#f0f0f0;"><span style="position:absolute;left:3px;top:0;line-height:15px;letter-spacing:-0.65px;color:#808080">0</span></div>
<div class="t" style="left:171.5px;top:790px;font-size:12px;letter-spacing:-1.75px;">mm</div>
<div class="t" style="left:14px;top:809px;font-size:12px;letter-spacing:-0.388px;">Linereduction</div>
<div class="ed" style="left:115px;top:808px;width:50px;height:16px;background:#fff;"><span style="position:absolute;left:3px;top:0;line-height:15px;letter-spacing:-0.65px;color:#000">0</span></div>
<div class="t" style="left:171.5px;top:811px;font-size:12px;letter-spacing:-1.75px;">mm</div>
<div class="t" style="left:14px;top:830px;font-size:12px;letter-spacing:-0.941px;">NumLoops</div>
<div class="ed" style="left:115px;top:829px;width:50px;height:16px;background:#fff;"><span style="position:absolute;left:3px;top:0;line-height:15px;letter-spacing:-0.65px;color:#000">0</span></div>
<div class="t" style="left:14px;top:850px;font-size:12px;letter-spacing:-0.362px;">Loop distance</div>
<div class="ed" style="left:115px;top:850px;width:50px;height:16px;background:#fff;"><span style="position:absolute;left:3px;top:0;line-height:15px;letter-spacing:-0.65px;color:#000">0.5</span></div>
<div class="t" style="left:171.5px;top:852px;font-size:12px;letter-spacing:-1.75px;">mm</div>
<div class="ck" style="left:16px;top:728px"><svg width="13" height="13" style="position:absolute;left:-1px;top:-1px" shape-rendering="crispEdges"><path d="M3 5h1v3h-1zM4 6h1v3h-1zM5 7h1v3h-1zM6 6h1v3h-1zM7 5h1v3h-1zM8 4h1v3h-1zM9 3h1v3h-1z" fill="#000"/></svg></div>
<div class="t" style="left:34.5px;top:726px;font-size:12px;letter-spacing:-0.17px;">Average distribute line</div>
<div class="ck" style="left:26px;top:869px"></div>
<div class="t" style="left:44.5px;top:867.5px;font-size:12px;letter-spacing:-0.267px;">Auto rorate angle</div>
<div class="ed" style="left:55px;top:886px;width:68px;height:18px;background:#fff;"><span style="position:absolute;left:3px;top:0;line-height:17px;letter-spacing:-0.65px;color:#000">10</span></div>
<div class="t" style="left:131px;top:888.5px;font-size:12px;letter-spacing:-0.839px;">deg</div>
<div class="btn" style="left:54px;top:908px;width:112px;height:20px;"><span class="bl" style="line-height:17px;letter-spacing:-0.1px">Delete Hatch</span></div>
<div class="pink" style="left:5px;top:531px;width:217px;height:404px;"></div>
<div style="left:233px;top:96px;width:30px;height:30px;border:1px solid;border-color:#a0a0a0 #fff #fff #a0a0a0;background:#f7f7f7"></div>
<div style="left:232px;top:562px;width:34px;height:1px;background:#a0a0a0"></div>
<div style="left:232px;top:563px;width:34px;height:1px;background:#fff"></div>
<div style="left:233px;top:91px;width:31px;height:1px;background:#fff"></div>
<div style="left:233px;top:92px;width:31px;height:1px;background:#a0a0a0"></div>
<div style="left:263px;top:90px;width:1px;height:3px;background:#a0a0a0"></div>
<div style="left:268px;top:88px;width:1px;height:30px;background:#fff"></div>
<div style="left:269px;top:88px;width:1px;height:30px;background:#a0a0a0"></div>
<svg style="position:absolute;left:236px;top:98px;" width="28" height="26" viewBox="0 0 28 26"><defs><linearGradient id="ga" x1="0" y1="0" x2="1" y2="1"><stop offset="0" stop-color="#fff"/><stop offset="1" stop-color="#9a9ab0"/></linearGradient></defs>
<path d="M6.500 4.500 L20 11.500 L15.500 13.500 L19.500 20.500 L16 22.500 L12 15.500 L8 19 Z" fill="url(#ga)" stroke="#222" stroke-width="1.200" stroke-linejoin="round"/></svg>
<svg style="position:absolute;left:234px;top:128px;" width="28" height="26" viewBox="0 0 28 26"><path d="M3.500 7.500 Q12 2.500 22.500 4.500" fill="none" stroke="#777" stroke-width="1.300"/>
<path d="M10.500 6 L23 19.500 L17 20.500 L13.500 24 Z" fill="url(#ga)" stroke="#222" stroke-width="1.200" stroke-linejoin="round"/><rect x="9.0" y="5.0" width="3" height="3" fill="#e8f0ff" stroke="#2a60d8" stroke-width=".9"/></svg>
<svg style="position:absolute;left:236px;top:162px;" width="24" height="22" viewBox="0 0 24 22"><path d="M5.400 4.200L18.500 17.200" stroke="#111" stroke-width="1.200"/><rect x="3.9000000000000004" y="2.7" width="3" height="3" fill="#e8f0ff" stroke="#2a60d8" stroke-width=".9"/><rect x="17.0" y="15.7" width="3" height="3" fill="#e8f0ff" stroke="#2a60d8" stroke-width=".9"/></svg>
<svg style="position:absolute;left:235px;top:190px;" width="26" height="28" viewBox="0 0 26 28"><defs><linearGradient id="gyl" x1="0" y1="0" x2="1" y2="1"><stop offset="0" stop-color="#ffe020"/><stop offset="1" stop-color="#ffc000"/></linearGradient></defs>
<path d="M9.500 3.500 Q11.500 4 11.800 7.500 Q12.500 11 18 13.500 Q23.500 16.500 21.500 21.500 Q20 25 15 24.500 Q7 23.500 4.500 17 Q3 10 9.500 3.500Z" fill="url(#gyl)" stroke="#a04818" stroke-width="1"/><rect x="10.0" y="5.7" width="3" height="3" fill="#e8f0ff" stroke="#2a60d8" stroke-width=".9"/><rect x="3.0" y="16.0" width="3" height="3" fill="#e8f0ff" stroke="#2a60d8" stroke-width=".9"/><rect x="17.0" y="21.5" width="3" height="3" fill="#e8f0ff" stroke="#2a60d8" stroke-width=".9"/></svg>
<svg style="position:absolute;left:236px;top:224px;" width="24" height="23" viewBox="0 0 24 23"><rect x="3" y="3" width="18.500" height="17.500" fill="url(#gyl)" stroke="#a06818" stroke-width=".9"/><rect x="1.5" y="1.5" width="3" height="3" fill="#e8f0ff" stroke="#2a60d8" stroke-width=".9"/><rect x="20.0" y="1.5" width="3" height="3" fill="#e8f0ff" stroke="#2a60d8" stroke-width=".9"/><rect x="1.5" y="19.0" width="3" height="3" fill="#e8f0ff" stroke="#2a60d8" stroke-width=".9"/><rect x="20.0" y="19.0" width="3" height="3" fill="#e8f0ff" stroke="#2a60d8" stroke-width=".9"/></svg>
<svg style="position:absolute;left:236px;top:254px;" width="25" height="25" viewBox="0 0 25 25"><circle cx="12.500" cy="12.500" r="10" fill="url(#gyl)" stroke="#a06818" stroke-width=".9"/><rect x="11.0" y="1.5" width="3" height="3" fill="#e8f0ff" stroke="#2a60d8" stroke-width=".9"/></svg>
<svg style="position:absolute;left:236px;top:289px;" width="25" height="17" viewBox="0 0 25 17"><ellipse cx="12.500" cy="9" rx="10.200" ry="5.700" fill="url(#gyl)" stroke="#a06818" stroke-width=".9"/><rect x="11.0" y="2.0" width="3" height="3" fill="#e8f0ff" stroke="#2a60d8" stroke-width=".9"/></svg>
<svg style="position:absolute;left:235px;top:316px;" width="26" height="25" viewBox="0 0 26 25"><path d="M2.500 13 L10.500 4 L21.500 4 L23 18.500 L10.500 22.500 Z" fill="url(#gyl)" stroke="#804818" stroke-width="1"/><rect x="1.0" y="11.5" width="3" height="3" fill="#e8f0ff" stroke="#2a60d8" stroke-width=".9"/><rect x="9.0" y="2.5" width="3" height="3" fill="#e8f0ff" stroke="#2a60d8" stroke-width=".9"/><rect x="20.0" y="2.5" width="3" height="3" fill="#e8f0ff" stroke="#2a60d8" stroke-width=".9"/><rect x="21.5" y="17.0" width="3" height="3" fill="#e8f0ff" stroke="#2a60d8" stroke-width=".9"/><rect x="9.0" y="21.0" width="3" height="3" fill="#e8f0ff" stroke="#2a60d8" stroke-width=".9"/></svg>
<svg style="position:absolute;left:237px;top:348px;" width="23" height="22" viewBox="0 0 23 22"><path d="M9.500 3.200 Q5 1.800 5 6.500 V8 H2.500 V10.500 H5 V19.500 H8.500 V10.500 H10.500 V8 H8.500 V6.800 Q8.500 5.500 9.500 5.800Z" fill="#f8d018" stroke="#705000" stroke-width=".8"/>
<path d="M11.500 2 H20 V4.500 H17.300 V17.500 H20 V20 H11.500 V17.500 H14.200 V4.500 H11.500Z" fill="#28a8e8" stroke="#0a4878" stroke-width=".8"/></svg>
<svg style="position:absolute;left:237px;top:380px;" width="22" height="20" viewBox="0 0 22 20"><defs><linearGradient id="gsk" x1="0" y1="0" x2="0" y2="1"><stop offset="0" stop-color="#58a8f0"/><stop offset=".5" stop-color="#a8d8f8"/><stop offset="1" stop-color="#f0f0c0"/></linearGradient></defs>
<rect x=".5" y=".5" width="21" height="19" fill="url(#gsk)"/><path d="M8 8 Q14 3 21.500 5 V13 H8Z" fill="#3060c8"/><path d="M.5 9 L4 3.500 L7 8 L9.500 5 L13 12 L21.500 14 V19.500 H.5Z" fill="#1c7028"/><path d="M12 14 Q17 12 21.500 13.500 V19.500 H12Z" fill="#b8d890"/></svg>
<svg style="position:absolute;left:236px;top:409px;" width="24" height="24" viewBox="0 0 24 24"><path d="M6 5.500 L17 2.500 Q19 2.300 19.500 4 Q22.500 10 21.500 16.500 L10.500 21.500 L9 21 Z" fill="#fff" stroke="#222" stroke-width="1.100" stroke-linejoin="round"/>
<path d="M14.500 8 L13 12 L16.500 13.500 L13 15 L13.500 19 L10.500 16 L7.500 18.500 L8 14.500 L4.500 13 L8.500 12 L8.500 8 L11 11 Z" fill="#f8d018" stroke="#6b5400" stroke-width=".6"/>
<path d="M2 13h21" stroke="#1878e8" stroke-width="1.200"/><rect x="7.5" y="11.5" width="3" height="3" fill="#e8f0ff" stroke="#2a60d8" stroke-width=".9"/><rect x="11.5" y="11.5" width="3" height="3" fill="#e8f0ff" stroke="#2a60d8" stroke-width=".9"/></svg>
<svg style="position:absolute;left:239px;top:447px;" width="19" height="14" viewBox="0 0 19 14"><rect x="0" y="0" width="1.5" height="9" fill="#222"/><rect x="2.5" y="0" width="1" height="9" fill="#222"/><rect x="4.5" y="0" width="1.5" height="9" fill="#222"/><rect x="7" y="0" width="1" height="9" fill="#222"/><rect x="8.8" y="0" width="1.5" height="9" fill="#222"/><rect x="11.3" y="0" width="1" height="9" fill="#222"/><rect x="13" y="0" width="1.5" height="9" fill="#222"/><rect x="15.5" y="0" width="1" height="9" fill="#222"/><rect x="17" y="0" width="1.5" height="9" fill="#222"/><text x="9.500" y="13.500" font-family="Liberation Mono" font-size="4.500" font-weight="bold" text-anchor="middle" textLength="18" lengthAdjust="spacingAndGlyphs" fill="#333">01234</text></svg>
<svg style="position:absolute;left:236px;top:471px;" width="25" height="25" viewBox="0 0 25 25"><defs><linearGradient id="gck" x1="0" y1="0" x2="1" y2="1"><stop offset="0" stop-color="#c8c8c8"/><stop offset="1" stop-color="#6e6e6e"/></linearGradient></defs>
<circle cx="12.500" cy="12.500" r="10.300" fill="#fafafa" stroke="url(#gck)" stroke-width="2.200"/><path d="M12.500 12.500 L8.500 8.500M12.500 12.500 L17.500 11.500" stroke="#333" stroke-width="1.200"/><path d="M12.500 12.500 L7.500 18" stroke="#e03030" stroke-width=".7"/></svg>
<svg style="position:absolute;left:243px;top:503px;" width="11" height="23" viewBox="0 0 11 23"><rect x=".8" y=".8" width="9" height="21" rx="4.500" fill="#8a8a8a"/><circle cx="5.300" cy="5" r="3.400" fill="#e04868"/><circle cx="5.300" cy="11.300" r="3.400" fill="#f8d828"/><circle cx="5.300" cy="17.600" r="3.400" fill="#38a848"/></svg>
<svg style="position:absolute;left:240px;top:541px;" width="17" height="10" viewBox="0 0 17 10"><path d="M1.500 1v8.500M15.500 1v8.500M1.500 5h4.500M5.500 2.500L15.500 8.500" stroke="#444" stroke-width="1.300" fill="none"/></svg>
<div style="left:274px;top:88px;width:35px;height:30px;background:#f0f0f0;border:2px solid #6e6e6e;border-bottom-width:3px;border-top-color:#7a7a7a"></div>
<div class="btn" style="left:309px;top:88px;width:35px;height:29px;"></div>
<div class="btn" style="left:344px;top:88px;width:35px;height:29px;"></div>
<div class="btn" style="left:386px;top:88px;width:35px;height:29px;"></div>
<div class="btn" style="left:421px;top:88px;width:35px;height:29px;"></div>
<div class="btn" style="left:456px;top:88px;width:35px;height:29px;"></div>
<div class="btn" style="left:498px;top:88px;width:35px;height:29px;"></div>
<div class="btn" style="left:540px;top:88px;width:35px;height:29px;"></div>
<div class="btn" style="left:592px;top:88px;width:35px;height:29px;"></div>
<div class="btn" style="left:629px;top:88px;width:35px;height:29px;"></div>
<div class="btn" style="left:675px;top:88px;width:35px;height:29px;"></div>
<div class="btn" style="left:711px;top:88px;width:35px;height:29px;"></div>
<svg style="position:absolute;left:278px;top:89px;" width="28" height="28" viewBox="0 0 28 28"><rect x="2.9" y="2.0" width="3" height="3" fill="#000"/><rect x="3.9" y="3.0" width="1" height="1" fill="#ccc"/><rect x="2.9" y="12.2" width="3" height="3" fill="#000"/><rect x="3.9" y="13.2" width="1" height="1" fill="#ccc"/><rect x="2.9" y="22.0" width="3" height="3" fill="#000"/><rect x="3.9" y="23.0" width="1" height="1" fill="#ccc"/><rect x="11.9" y="2.0" width="3" height="3" fill="#000"/><rect x="12.9" y="3.0" width="1" height="1" fill="#ccc"/><rect x="11.9" y="22.0" width="3" height="3" fill="#000"/><rect x="12.9" y="23.0" width="1" height="1" fill="#ccc"/><rect x="21.0" y="2.0" width="3" height="3" fill="#000"/><rect x="22.0" y="3.0" width="1" height="1" fill="#ccc"/><rect x="21.0" y="12.2" width="3" height="3" fill="#000"/><rect x="22.0" y="13.2" width="1" height="1" fill="#ccc"/><rect x="21.0" y="22.0" width="3" height="3" fill="#000"/><rect x="22.0" y="23.0" width="1" height="1" fill="#ccc"/><rect x="7.500" y="7.500" width="9.500" height="7" fill="none" stroke="#1010ff" stroke-width="1.200"/><circle cx="17.200" cy="15.600" r="4" fill="none" stroke="#1010ff" stroke-width="1.200"/></svg>
<svg style="position:absolute;left:313px;top:89px;" width="28" height="28" viewBox="0 0 28 28"><circle cx="19.400" cy="16" r="5.700" fill="none" stroke="#000" stroke-width="1"/><rect x="2.8" y="2.0" width="3" height="3" fill="#000"/><rect x="3.8" y="3.0" width="1" height="1" fill="#ccc"/><rect x="2.8" y="13.1" width="3" height="3" fill="#000"/><rect x="3.8" y="14.1" width="1" height="1" fill="#ccc"/><rect x="9.8" y="2.0" width="3" height="3" fill="#000"/><rect x="10.8" y="3.0" width="1" height="1" fill="#ccc"/><rect x="9.8" y="13.1" width="3" height="3" fill="#000"/><rect x="10.8" y="14.1" width="1" height="1" fill="#ccc"/><rect x="16.0" y="2.0" width="3" height="3" fill="#000"/><rect x="17.0" y="3.0" width="1" height="1" fill="#ccc"/><rect x="16.0" y="13.1" width="3" height="3" fill="#000"/><rect x="17.0" y="14.1" width="1" height="1" fill="#ccc"/><rect x="6.500" y="5.500" width="9" height="6.800" fill="#f0f0f0" stroke="#1010ff" stroke-width="1.300"/><path d="M17.500 9 Q19.500 6 22.500 8" fill="none" stroke="#1010ff" stroke-width="1.200"/><path d="M20.500 9.500 l3 .3 l-.8 -3z" fill="#1010ff"/></svg>
<svg style="position:absolute;left:348px;top:89px;" width="28" height="28" viewBox="0 0 28 28"><rect x="2.9" y="4.1" width="3" height="3" fill="#000"/><rect x="3.9" y="5.1" width="1" height="1" fill="#ccc"/><rect x="2.9" y="12.2" width="3" height="3" fill="#000"/><rect x="3.9" y="13.2" width="1" height="1" fill="#ccc"/><rect x="2.9" y="18.8" width="3" height="3" fill="#000"/><rect x="3.9" y="19.8" width="1" height="1" fill="#ccc"/><rect x="11.0" y="4.1" width="3" height="3" fill="#000"/><rect x="12.0" y="5.1" width="1" height="1" fill="#ccc"/><rect x="11.0" y="18.8" width="3" height="3" fill="#000"/><rect x="12.0" y="19.8" width="1" height="1" fill="#ccc"/><rect x="19.1" y="4.1" width="3" height="3" fill="#000"/><rect x="20.1" y="5.1" width="1" height="1" fill="#ccc"/><rect x="19.1" y="12.2" width="3" height="3" fill="#000"/><rect x="20.1" y="13.2" width="1" height="1" fill="#ccc"/><rect x="19.1" y="18.8" width="3" height="3" fill="#000"/><rect x="20.1" y="19.8" width="1" height="1" fill="#ccc"/><rect x="7.300" y="9.500" width="10.500" height="7" fill="#f0f0f0" stroke="#1010ff" stroke-width="1.300"/><path d="M10.800 11.200l3.500 3.500M14.300 11.200l-3.500 3.500" stroke="#f00" stroke-width="1.200"/></svg>
<svg style="position:absolute;left:396px;top:94px;" width="15" height="17" viewBox="0 0 15 17"><path d="M3.500 8V5.500a3.700 3.700 0 0 1 7.400 0V8" fill="none" stroke="#000" stroke-width="1.700"/><path d="M4.800 8V6a2.400 2.400 0 0 1 4.800 0V8" fill="none" stroke="#aaa" stroke-width=".8"/><rect x="1.500" y="7.500" width="11.500" height="8" fill="#787878" stroke="#000" stroke-width="1.300"/><path d="M2.500 9h9.500" stroke="#ddd" stroke-width=".9"/></svg>
<svg style="position:absolute;left:431px;top:93px;" width="15" height="18" viewBox="0 0 15 18"><path d="M3 9V5.500a3.700 3.700 0 0 1 7.400 0V6.500" fill="none" stroke="#a0a0a0" stroke-width="2.200"/><rect x="1" y="8.500" width="12" height="8.500" fill="#a0a0a0"/></svg>
<svg style="position:absolute;left:465px;top:92px;" width="18" height="21" viewBox="0 0 18 21"><path d="M4 8V5.500a3.700 3.700 0 0 1 6.500 -2.500" fill="none" stroke="#a0a0a0" stroke-width="2.200"/><path d="M7.500 3.500 Q10 0.500 13 3 Q15 5 15.500 9" fill="none" stroke="#a0a0a0" stroke-width="2.400"/><rect x="1" y="7.500" width="11" height="8" fill="#a0a0a0"/><rect x="5" y="9" width="12" height="11" fill="#a0a0a0"/></svg>
<svg style="position:absolute;left:503px;top:93px;" width="23" height="21" viewBox="0 0 23 21"><path d="M6.500 3.200V20M1 14.500h19" stroke="#000" stroke-width="1"/><rect x="6" y="14" width="1" height="1" fill="#e00"/><rect x="13.500" y="1.500" width="8" height="6.500" fill="none" stroke="#000" stroke-width="1"/><path d="M13 9.500L9 13" stroke="#1010ff" stroke-width="1.200"/><path d="M8 14l.8-3.500 2.700 2.700z" fill="#1010ff"/></svg>
<svg style="position:absolute;left:545px;top:90px;" width="32" height="30" viewBox="0 0 32 30"><rect x="2" y="1" width="11" height="9" fill="#000"/><rect x="4" y="3" width="11" height="9" fill="#f00"/><rect x="6.500" y="5" width="11" height="9" fill="#00d000"/><rect x="8.500" y="7" width="11" height="9" fill="#000090"/><rect x="10.500" y="9.500" width="11.500" height="9" fill="#00f0f0"/>
<path d="M17 11.500 L17 27.500 L20.500 24.500 L22.500 29 L25.500 28 L23.500 23.500 L28.500 23.500 Z" fill="#fff" stroke="#000" stroke-width="1"/></svg>
<svg style="position:absolute;left:594px;top:90px;" width="30" height="26" viewBox="0 0 30 26"><path d="M2.500 21.500 L11.800 3.800 V21.500Z" fill="#800000" stroke="#500" stroke-width=".6"/><path d="M17.200 3.800 V21.500 H26.500Z" fill="#c8c8c8" stroke="#333" stroke-width=".9"/><path d="M14.500 1.500V24.500" stroke="#f00" stroke-width="1.200" stroke-dasharray="7 1.500 2 1.500"/></svg>
<svg style="position:absolute;left:634px;top:89px;" width="26" height="27" viewBox="0 0 26 27"><path d="M3 10.300 L20.700 1.700 V10.300Z" fill="#800000" stroke="#500" stroke-width=".6"/><path d="M3 16.100 H20.700 V25.200Z" fill="#c8c8c8" stroke="#333" stroke-width=".9"/><path d="M2 13.500H23" stroke="#f00" stroke-width="1.200" stroke-dasharray="7 1.500 2 1.500"/></svg>
<svg style="position:absolute;left:679px;top:92px;" width="25" height="20" viewBox="0 0 25 20"><path d="M1 11 Q12.500 .5 24 11 Q12.500 19.500 1 11Z" fill="#f0f0f0" stroke="#000" stroke-width="1.500"/><path d="M4 14.500 Q12.500 20.500 21 14.500" fill="none" stroke="#000" stroke-width="1.300"/><circle cx="12.500" cy="11" r="4.300" fill="#666" stroke="#000" stroke-width=".9"/><circle cx="12.500" cy="11" r="1.800" fill="#000"/><circle cx="11.600" cy="10.200" r=".8" fill="#fff"/>
<path d="M4.500 6.200 L2.500 3.200M8.200 4.200 L7 1M12.500 3.500 V0.200M16.800 4.200 L18 1M20.500 6.200 L22.500 3.200" stroke="#000" stroke-width="1.300"/></svg>
<svg style="position:absolute;left:715px;top:92px;" width="25" height="20" viewBox="0 0 25 20"><path d="M1 11 Q12.500 .5 24 11 Q12.500 19.500 1 11Z" fill="#f0f0f0" stroke="#000" stroke-width="1.500"/><path d="M4 14.500 Q12.500 20.500 21 14.500" fill="none" stroke="#000" stroke-width="1.300"/><circle cx="12.500" cy="11" r="4.300" fill="#888" stroke="#222" stroke-width=".9"/><circle cx="12.500" cy="11" r="1.600" fill="#aaa" stroke="#444" stroke-width=".6"/>
<path d="M4.500 6.200 L2.500 3.200M8.200 4.200 L7 1M12.500 3.500 V0.200M16.800 4.200 L18 1M20.500 6.200 L22.500 3.200" stroke="#000" stroke-width="1.300"/></svg>
<div style="left:265px;top:119px;width:876px;height:837px;border:1px solid;border-color:#8a8a8a #fff #fff #8a8a8a;box-shadow:inset 1px 1px 0 #696969"></div>
<div style="left:267px;top:121px;width:856px;height:817px;background:#fff"></div>
<svg style="position:absolute;left:268px;top:122px;" width="855" height="816" viewBox="0 0 855 816"><path d="M19.5 18.500H853.500M613.500 0V18" stroke="#000" stroke-width="1" fill="none"/><path d="M22.5 18v-5 M27.5 18v-8 M33.5 18v-5 M38.5 18v-5 M43.5 18v-5 M48.5 18v-5 M53.5 18v-10 M58.5 18v-5 M64.5 18v-5 M69.5 18v-5 M74.5 18v-5 M79.5 18v-8 M84.5 18v-5 M89.5 18v-5 M94.5 18v-5 M100.5 18v-5 M105.5 18v-10 M110.5 18v-5 M115.5 18v-5 M120.5 18v-5 M125.5 18v-5 M131.5 18v-8 M136.5 18v-5 M141.5 18v-5 M146.5 18v-5 M151.5 18v-5 M156.5 18v-10 M162.5 18v-5 M167.5 18v-5 M172.5 18v-5 M177.5 18v-5 M182.5 18v-8 M187.5 18v-5 M193.5 18v-5 M198.5 18v-5 M203.5 18v-5 M208.5 18v-10 M213.5 18v-5 M218.5 18v-5 M223.5 18v-5 M229.5 18v-5 M234.5 18v-8 M239.5 18v-5 M244.5 18v-5 M249.5 18v-5 M254.5 18v-5 M260.5 18v-10 M265.5 18v-5 M270.5 18v-5 M275.5 18v-5 M280.5 18v-5 M285.5 18v-8 M291.5 18v-5 M296.5 18v-5 M301.5 18v-5 M306.5 18v-5 M311.5 18v-10 M316.5 18v-5 M322.5 18v-5 M327.5 18v-5 M332.5 18v-5 M337.5 18v-8 M342.5 18v-5 M347.5 18v-5 M352.5 18v-5 M358.5 18v-5 M363.5 18v-10 M368.5 18v-5 M373.5 18v-5 M378.5 18v-5 M383.5 18v-5 M389.5 18v-8 M394.5 18v-5 M399.5 18v-5 M404.5 18v-5 M409.5 18v-5 M414.5 18v-10 M420.5 18v-5 M425.5 18v-5 M430.5 18v-5 M435.5 18v-5 M440.5 18v-8 M445.5 18v-5 M451.5 18v-5 M456.5 18v-5 M461.5 18v-5 M466.5 18v-10 M471.5 18v-5 M476.5 18v-5 M481.5 18v-5 M487.5 18v-5 M492.5 18v-8 M497.5 18v-5 M502.5 18v-5 M507.5 18v-5 M512.5 18v-5 M518.5 18v-10 M523.5 18v-5 M528.5 18v-5 M533.5 18v-5 M538.5 18v-5 M543.5 18v-8 M549.5 18v-5 M554.5 18v-5 M559.5 18v-5 M564.5 18v-5 M569.5 18v-10 M574.5 18v-5 M580.5 18v-5 M585.5 18v-5 M590.5 18v-5 M595.5 18v-8 M600.5 18v-5 M605.5 18v-5 M610.5 18v-5 M616.5 18v-5 M621.5 18v-10 M626.5 18v-5 M631.5 18v-5 M636.5 18v-5 M641.5 18v-5 M647.5 18v-8 M652.5 18v-5 M657.5 18v-5 M662.5 18v-5 M667.5 18v-5 M672.5 18v-10 M678.5 18v-5 M683.5 18v-5 M688.5 18v-5 M693.5 18v-5 M698.5 18v-8 M703.5 18v-5 M709.5 18v-5 M714.5 18v-5 M719.5 18v-5 M724.5 18v-10 M729.5 18v-5 M734.5 18v-5 M739.5 18v-5 M745.5 18v-5 M750.5 18v-8 M755.5 18v-5 M760.5 18v-5 M765.5 18v-5 M770.5 18v-5 M776.5 18v-10 M781.5 18v-5 M786.5 18v-5 M791.5 18v-5 M796.5 18v-5 M801.5 18v-8 M807.5 18v-5 M812.5 18v-5 M817.5 18v-5 M822.5 18v-5 M827.5 18v-10 M832.5 18v-5 M838.5 18v-5 M843.5 18v-5 M848.5 18v-5 M853.5 18v-8" stroke="#000" stroke-width="1" fill="none"/><text x="52.8" y="7" font-size="9" text-anchor="middle" font-family="Liberation Sans" fill="#000" stroke="#000" stroke-width=".15">-16</text><text x="104.4" y="7" font-size="9" text-anchor="middle" font-family="Liberation Sans" fill="#000" stroke="#000" stroke-width=".15">-14</text><text x="156.0" y="7" font-size="9" text-anchor="middle" font-family="Liberation Sans" fill="#000" stroke="#000" stroke-width=".15">-12</text><text x="207.6" y="7" font-size="9" text-anchor="middle" font-family="Liberation Sans" fill="#000" stroke="#000" stroke-width=".15">-10</text><text x="261.5" y="7" font-size="9" text-anchor="middle" font-family="Liberation Sans" fill="#000" stroke="#000" stroke-width=".15">-8</text><text x="313.1" y="7" font-size="9" text-anchor="middle" font-family="Liberation Sans" fill="#000" stroke="#000" stroke-width=".15">-6</text><text x="364.7" y="7" font-size="9" text-anchor="middle" font-family="Liberation Sans" fill="#000" stroke="#000" stroke-width=".15">-4</text><text x="416.3" y="7" font-size="9" text-anchor="middle" font-family="Liberation Sans" fill="#000" stroke="#000" stroke-width=".15">-2</text><text x="466.5" y="7" font-size="9" text-anchor="middle" font-family="Liberation Sans" fill="#000" stroke="#000" stroke-width=".15">0</text><text x="518.1" y="7" font-size="9" text-anchor="middle" font-family="Liberation Sans" fill="#000" stroke="#000" stroke-width=".15">2</text><text x="569.7" y="7" font-size="9" text-anchor="middle" font-family="Liberation Sans" fill="#000" stroke="#000" stroke-width=".15">4</text><text x="621.3" y="7" font-size="9" text-anchor="middle" font-family="Liberation Sans" fill="#000" stroke="#000" stroke-width=".15">6</text><text x="672.9" y="7" font-size="9" text-anchor="middle" font-family="Liberation Sans" fill="#000" stroke="#000" stroke-width=".15">8</text><text x="724.5" y="7" font-size="9" text-anchor="middle" font-family="Liberation Sans" fill="#000" stroke="#000" stroke-width=".15">10</text><text x="776.1" y="7" font-size="9" text-anchor="middle" font-family="Liberation Sans" fill="#000" stroke="#000" stroke-width=".15">12</text><text x="827.7" y="7" font-size="9" text-anchor="middle" font-family="Liberation Sans" fill="#000" stroke="#000" stroke-width=".15">14</text><path d="M0 19.500H19M18.500 19V816" stroke="#000" stroke-width="1" fill="none"/><path d="M18 812.5h-5 M18 807.5h-10 M18 801.5h-5 M18 796.5h-5 M18 791.5h-5 M18 786.5h-5 M18 781.5h-8 M18 776.5h-5 M18 771.5h-5 M18 765.5h-5 M18 760.5h-5 M18 755.5h-10 M18 750.5h-5 M18 745.5h-5 M18 740.5h-5 M18 735.5h-5 M18 729.5h-8 M18 724.5h-5 M18 719.5h-5 M18 714.5h-5 M18 709.5h-5 M18 704.5h-10 M18 698.5h-5 M18 693.5h-5 M18 688.5h-5 M18 683.5h-5 M18 678.5h-8 M18 673.5h-5 M18 668.5h-5 M18 662.5h-5 M18 657.5h-5 M18 652.5h-10 M18 647.5h-5 M18 642.5h-5 M18 637.5h-5 M18 632.5h-5 M18 626.5h-8 M18 621.5h-5 M18 616.5h-5 M18 611.5h-5 M18 606.5h-5 M18 601.5h-10 M18 595.5h-5 M18 590.5h-5 M18 585.5h-5 M18 580.5h-5 M18 575.5h-8 M18 570.5h-5 M18 565.5h-5 M18 559.5h-5 M18 554.5h-5 M18 549.5h-10 M18 544.5h-5 M18 539.5h-5 M18 534.5h-5 M18 529.5h-5 M18 523.5h-8 M18 518.5h-5 M18 513.5h-5 M18 508.5h-5 M18 503.5h-5 M18 498.5h-10 M18 492.5h-5 M18 487.5h-5 M18 482.5h-5 M18 477.5h-5 M18 472.5h-8 M18 467.5h-5 M18 462.5h-5 M18 456.5h-5 M18 451.5h-5 M18 446.5h-10 M18 441.5h-5 M18 436.5h-5 M18 431.5h-5 M18 426.5h-5 M18 420.5h-8 M18 415.5h-5 M18 410.5h-5 M18 405.5h-5 M18 400.5h-5 M18 395.5h-10 M18 389.5h-5 M18 384.5h-5 M18 379.5h-5 M18 374.5h-5 M18 369.5h-8 M18 364.5h-5 M18 359.5h-5 M18 353.5h-5 M18 348.5h-5 M18 343.5h-10 M18 338.5h-5 M18 333.5h-5 M18 328.5h-5 M18 323.5h-5 M18 317.5h-8 M18 312.5h-5 M18 307.5h-5 M18 302.5h-5 M18 297.5h-5 M18 292.5h-10 M18 286.5h-5 M18 281.5h-5 M18 276.5h-5 M18 271.5h-5 M18 266.5h-8 M18 261.5h-5 M18 256.5h-5 M18 250.5h-5 M18 245.5h-5 M18 240.5h-10 M18 235.5h-5 M18 230.5h-5 M18 225.5h-5 M18 220.5h-5 M18 214.5h-8 M18 209.5h-5 M18 204.5h-5 M18 199.5h-5 M18 194.5h-5 M18 189.5h-10 M18 183.5h-5 M18 178.5h-5 M18 173.5h-5 M18 168.5h-5 M18 163.5h-8 M18 158.5h-5 M18 153.5h-5 M18 147.5h-5 M18 142.5h-5 M18 137.5h-10 M18 132.5h-5 M18 127.5h-5 M18 122.5h-5 M18 117.5h-5 M18 111.5h-8 M18 106.5h-5 M18 101.5h-5 M18 96.5h-5 M18 91.5h-5 M18 86.5h-10 M18 80.5h-5 M18 75.5h-5 M18 70.5h-5 M18 65.5h-5 M18 60.5h-8 M18 55.5h-5 M18 50.5h-5 M18 44.5h-5 M18 39.5h-5 M18 34.5h-10 M18 29.5h-5 M18 24.5h-5" stroke="#000" stroke-width="1" fill="none"/><text transform="translate(6.500,807.7) rotate(-90)" font-size="9" text-anchor="middle" font-family="Liberation Sans" fill="#000" stroke="#000" stroke-width=".15">-14</text><text transform="translate(6.500,756.2) rotate(-90)" font-size="9" text-anchor="middle" font-family="Liberation Sans" fill="#000" stroke="#000" stroke-width=".15">-12</text><text transform="translate(6.500,704.7) rotate(-90)" font-size="9" text-anchor="middle" font-family="Liberation Sans" fill="#000" stroke="#000" stroke-width=".15">-10</text><text transform="translate(6.500,653.2) rotate(-90)" font-size="9" text-anchor="middle" font-family="Liberation Sans" fill="#000" stroke="#000" stroke-width=".15">-8</text><text transform="translate(6.500,601.7) rotate(-90)" font-size="9" text-anchor="middle" font-family="Liberation Sans" fill="#000" stroke="#000" stroke-width=".15">-6</text><text transform="translate(6.500,550.2) rotate(-90)" font-size="9" text-anchor="middle" font-family="Liberation Sans" fill="#000" stroke="#000" stroke-width=".15">-4</text><text transform="translate(6.500,498.7) rotate(-90)" font-size="9" text-anchor="middle" font-family="Liberation Sans" fill="#000" stroke="#000" stroke-width=".15">-2</text><text transform="translate(6.500,446.0) rotate(-90)" font-size="9" text-anchor="middle" font-family="Liberation Sans" fill="#000" stroke="#000" stroke-width=".15">0</text><text transform="translate(6.500,394.5) rotate(-90)" font-size="9" text-anchor="middle" font-family="Liberation Sans" fill="#000" stroke="#000" stroke-width=".15">2</text><text transform="translate(6.500,343.0) rotate(-90)" font-size="9" text-anchor="middle" font-family="Liberation Sans" fill="#000" stroke="#000" stroke-width=".15">4</text><text transform="translate(6.500,291.5) rotate(-90)" font-size="9" text-anchor="middle" font-family="Liberation Sans" fill="#000" stroke="#000" stroke-width=".15">6</text><text transform="translate(6.500,240.0) rotate(-90)" font-size="9" text-anchor="middle" font-family="Liberation Sans" fill="#000" stroke="#000" stroke-width=".15">8</text><text transform="translate(6.500,188.5) rotate(-90)" font-size="9" text-anchor="middle" font-family="Liberation Sans" fill="#000" stroke="#000" stroke-width=".15">10</text><text transform="translate(6.500,137.0) rotate(-90)" font-size="9" text-anchor="middle" font-family="Liberation Sans" fill="#000" stroke="#000" stroke-width=".15">12</text><text transform="translate(6.500,85.5) rotate(-90)" font-size="9" text-anchor="middle" font-family="Liberation Sans" fill="#000" stroke="#000" stroke-width=".15">14</text><text transform="translate(6.500,34.0) rotate(-90)" font-size="9" text-anchor="middle" font-family="Liberation Sans" fill="#000" stroke="#000" stroke-width=".15">16</text></svg>
<div style="left:1130px;top:520px;width:2px;height:17px;background:#8a8a8a"></div>
<div style="left:686px;top:945px;width:17px;height:2px;background:#8a8a8a"></div>
<div style="left:1143px;top:88px;width:1px;height:922px;background:#fff"></div>
<div style="left:1144px;top:88px;width:1px;height:922px;background:#a0a0a0"></div>
<svg style="position:absolute;left:480px;top:490px;" width="510" height="160" viewBox="0 0 510 160"><rect x="31.0" y="29.5" width="7" height="7" fill="#404040"/><rect x="31.0" y="76.0" width="7" height="7" fill="#404040"/><rect x="31.0" y="122.5" width="7" height="7" fill="#404040"/><rect x="251.0" y="29.5" width="7" height="7" fill="#404040"/><rect x="251.0" y="122.5" width="7" height="7" fill="#404040"/><rect x="471.0" y="29.5" width="7" height="7" fill="#404040"/><rect x="471.0" y="76.0" width="7" height="7" fill="#404040"/><rect x="471.0" y="122.5" width="7" height="7" fill="#404040"/><path d="M66.3 80.4L66.3 51.4" stroke="#000" stroke-width="2.6"/><path d="M66.3 80.4L66.3 108.4" stroke="#000" stroke-width="2.6"/><path d="M66.3 80.4L108.9 80.4" stroke="#000" stroke-width="2.6"/><path d="M66.3 80.4L89.2 60.2" stroke="#000" stroke-width="3"/><path d="M66.3 80.4L43.9 59.7" stroke="#000" stroke-width="3"/><path d="M66.3 80.4L43.9 100.6" stroke="#000" stroke-width="3"/><path d="M66.3 80.4L89.2 99.7" stroke="#000" stroke-width="3"/><path d="M66.3 80.4L57.9 59.7" stroke="#000" stroke-width="3"/><path d="M66.3 80.4L75.1 59.7" stroke="#000" stroke-width="3"/><path d="M66.3 80.4L57.9 100.6" stroke="#000" stroke-width="3"/><path d="M66.3 80.4L75.1 100.6" stroke="#000" stroke-width="3"/><path d="M66.3 80.4L44.8 75.1" stroke="#000" stroke-width="2.8"/><path d="M66.3 80.4L44.8 85.7" stroke="#000" stroke-width="2.8"/><circle cx="66.3" cy="80.4" r="5" fill="#000"/><ellipse cx="66.3" cy="80.4" rx="1.300" ry="1.800" fill="#fff"/><rect x="120.300" y="41.300" width="4.500" height="77.400" fill="#000"/><text x="134.500" y="95.300" font-family="Liberation Sans" font-weight="bold" font-size="43.200" textLength="146" lengthAdjust="spacingAndGlyphs" fill="#000" stroke="#000" stroke-width="1">LASER</text><text x="292.500" y="95.300" font-family="Liberation Sans" font-weight="bold" font-size="43.200" textLength="176" lengthAdjust="spacingAndGlyphs" fill="#000" stroke="#000" stroke-width="1">WORKS</text><path d="M252.300 77l4.600 4.600M256.900 77l-4.600 4.600" stroke="#b0b0b0" stroke-width="1.300"/></svg>
<div style="left:1149px;top:89px;width:193px;height:13px;background:linear-gradient(90deg,#bccee4 0%,#c3d3e6 45%,#d9e3ee 80%,#e6ebf1 100%)"></div>
<div class="t" style="left:1151px;top:87px;font-size:12px;letter-spacing:-0.585px;">Mark parameter</div>
<svg style="position:absolute;left:1346px;top:91px;" width="9" height="9" viewBox="0 0 9 9"><path d="M1.500 1.500l5 5M6.500 1.500l-5 5" stroke="#000" stroke-width="1.600" fill="none"/></svg>
<div style="left:1153px;top:124px;width:188px;height:130px;border:1px solid;border-color:#a0a0a0 #fff #fff #a0a0a0;box-shadow:inset 1px 1px 0 #696969, inset -1px -1px 0 #e3e3e3"></div>
<div style="left:1155px;top:125px;width:89px;height:16px;background:#f0f0f0;border:1px solid;border-color:#fff #696969 #696969 #fff;box-shadow:inset -1px -1px 0 #a0a0a0"></div>
<div class="t" style="left:1161px;top:124.69999999999999px;font-size:12px;letter-spacing:-0.503px;">Pen No</div>
<div style="left:1244px;top:125px;width:46px;height:16px;background:#f0f0f0;border:1px solid;border-color:#fff #696969 #696969 #fff;box-shadow:inset -1px -1px 0 #a0a0a0"></div>
<div class="t" style="left:1250px;top:124.69999999999999px;font-size:12px;letter-spacing:-0.338px;">Color</div>
<div style="left:1290px;top:125px;width:34px;height:16px;background:#f0f0f0;border:1px solid;border-color:#fff #f0f0f0 #696969 #fff;box-shadow:inset 0 -1px 0 #a0a0a0"></div>
<div class="t" style="left:1296px;top:124.69999999999999px;font-size:12px;letter-spacing:-0.414px;">On/O</div>
<div style="left:1155px;top:141px;width:169px;height:95px;background:#fff;overflow:hidden"></div>
<div style="left:1167px;top:143px;width:78px;height:12px;background:#0078d7"></div>
<svg style="position:absolute;left:1155px;top:143px;" width="12" height="12" viewBox="0 0 12 12"><path d="M5.500 .5v11M0 5.500h11M2 2.500l7 6M9 2.500l-7 6" stroke="#ff0000" stroke-width="1"/></svg>
<div class="t" style="left:1171px;top:140.8px;font-size:12px;letter-spacing:-0.3px;color:#fff">0</div>
<div class="t" style="left:1181px;top:140.8px;font-size:12px;letter-spacing:-0.288px;color:#fff">Default</div>
<div style="left:1246px;top:144px;width:43px;height:11px;background:#000;border:1px solid #000"></div>
<div class="t" style="left:1296px;top:140.8px;font-size:12px;letter-spacing:-1.25px;">On</div>
<svg style="position:absolute;left:1155px;top:156px;" width="12" height="12" viewBox="0 0 12 12"><path d="M5.500 .5v11M0 5.500h11M2 2.500l7 6M9 2.500l-7 6" stroke="#ff0000" stroke-width="1"/></svg>
<div class="t" style="left:1171px;top:153.8px;font-size:12px;letter-spacing:-0.3px;">1</div>
<div class="t" style="left:1181px;top:153.8px;font-size:12px;letter-spacing:-0.288px;">Default</div>
<div style="left:1246px;top:157px;width:43px;height:11px;background:#0000ff;border:1px solid #000"></div>
<div class="t" style="left:1296px;top:153.8px;font-size:12px;letter-spacing:-1.25px;">On</div>
<div style="left:1155px;top:155px;width:169px;height:1px;background:#f0f0f0"></div>
<svg style="position:absolute;left:1155px;top:169px;" width="12" height="12" viewBox="0 0 12 12"><path d="M5.500 .5v11M0 5.500h11M2 2.500l7 6M9 2.500l-7 6" stroke="#ff0000" stroke-width="1"/></svg>
<div class="t" style="left:1171px;top:166.8px;font-size:12px;letter-spacing:-0.3px;">2</div>
<div class="t" style="left:1181px;top:166.8px;font-size:12px;letter-spacing:-0.288px;">Default</div>
<div style="left:1246px;top:170px;width:43px;height:11px;background:#ff0000;border:1px solid #000"></div>
<div class="t" style="left:1296px;top:166.8px;font-size:12px;letter-spacing:-1.25px;">On</div>
<div style="left:1155px;top:168px;width:169px;height:1px;background:#f0f0f0"></div>
<svg style="position:absolute;left:1155px;top:182px;" width="12" height="12" viewBox="0 0 12 12"><path d="M5.500 .5v11M0 5.500h11M2 2.500l7 6M9 2.500l-7 6" stroke="#ff0000" stroke-width="1"/></svg>
<div class="t" style="left:1171px;top:179.8px;font-size:12px;letter-spacing:-0.3px;">3</div>
<div class="t" style="left:1181px;top:179.8px;font-size:12px;letter-spacing:-0.288px;">Default</div>
<div style="left:1246px;top:183px;width:43px;height:11px;background:#00ff00;border:1px solid #000"></div>
<div class="t" style="left:1296px;top:179.8px;font-size:12px;letter-spacing:-1.25px;">On</div>
<div style="left:1155px;top:181px;width:169px;height:1px;background:#f0f0f0"></div>
<svg style="position:absolute;left:1155px;top:195px;" width="12" height="12" viewBox="0 0 12 12"><path d="M5.500 .5v11M0 5.500h11M2 2.500l7 6M9 2.500l-7 6" stroke="#ff0000" stroke-width="1"/></svg>
<div class="t" style="left:1171px;top:192.8px;font-size:12px;letter-spacing:-0.3px;">4</div>
<div class="t" style="left:1181px;top:192.8px;font-size:12px;letter-spacing:-0.288px;">Default</div>
<div style="left:1246px;top:196px;width:43px;height:11px;background:#ff00ff;border:1px solid #000"></div>
<div class="t" style="left:1296px;top:192.8px;font-size:12px;letter-spacing:-1.25px;">On</div>
<div style="left:1155px;top:194px;width:169px;height:1px;background:#f0f0f0"></div>
<svg style="position:absolute;left:1155px;top:208px;" width="12" height="12" viewBox="0 0 12 12"><path d="M5.500 .5v11M0 5.500h11M2 2.500l7 6M9 2.500l-7 6" stroke="#ff0000" stroke-width="1"/></svg>
<div class="t" style="left:1171px;top:205.8px;font-size:12px;letter-spacing:-0.3px;">5</div>
<div class="t" style="left:1181px;top:205.8px;font-size:12px;letter-spacing:-0.288px;">Default</div>
<div style="left:1246px;top:209px;width:43px;height:11px;background:#ffff00;border:1px solid #000"></div>
<div class="t" style="left:1296px;top:205.8px;font-size:12px;letter-spacing:-1.25px;">On</div>
<div style="left:1155px;top:207px;width:169px;height:1px;background:#f0f0f0"></div>
<svg style="position:absolute;left:1155px;top:221px;" width="12" height="12" viewBox="0 0 12 12"><path d="M5.500 .5v11M0 5.500h11M2 2.500l7 6M9 2.500l-7 6" stroke="#ff0000" stroke-width="1"/></svg>
<div class="t" style="left:1171px;top:218.8px;font-size:12px;letter-spacing:-0.3px;">6</div>
<div class="t" style="left:1181px;top:218.8px;font-size:12px;letter-spacing:-0.288px;">Default</div>
<div style="left:1246px;top:222px;width:43px;height:11px;background:#ff8080;border:1px solid #000"></div>
<div class="t" style="left:1296px;top:218.8px;font-size:12px;letter-spacing:-1.25px;">On</div>
<div style="left:1155px;top:220px;width:169px;height:1px;background:#f0f0f0"></div>
<svg style="position:absolute;left:1155px;top:234px;" width="12" height="12" viewBox="0 0 12 12"><path d="M5.500 .5v11M0 5.500h11M2 2.500l7 6M9 2.500l-7 6" stroke="#ff0000" stroke-width="1"/></svg>
<div class="t" style="left:1171px;top:231.8px;font-size:12px;letter-spacing:-0.3px;">7</div>
<div class="t" style="left:1181px;top:231.8px;font-size:12px;letter-spacing:-0.288px;">Default</div>
<div style="left:1246px;top:235px;width:43px;height:11px;background:#000;border:1px solid #000"></div>
<div class="t" style="left:1296px;top:231.8px;font-size:12px;letter-spacing:-1.25px;">On</div>
<div style="left:1155px;top:233px;width:169px;height:1px;background:#f0f0f0"></div>
<div style="left:1153px;top:235px;width:188px;height:19px;background:transparent"></div>
<div style="left:1155px;top:236px;width:169px;height:16px;background:#f0f0f0"></div>
<div style="left:1331px;top:143px;width:2px;height:15px;background:#8a8a8a"></div>
<div style="left:1172px;top:244px;width:119px;height:2px;background:#8a8a8a"></div>
<div style="left:1156px;top:258px;width:21px;height:18px;background:#000"></div>
<div style="left:1179px;top:258px;width:21px;height:18px;background:#0000ff"></div>
<div style="left:1202px;top:258px;width:21px;height:18px;background:#ff0000"></div>
<div style="left:1224px;top:258px;width:21px;height:18px;background:#00ff00"></div>
<div style="left:1247px;top:258px;width:21px;height:18px;background:#ff00ff"></div>
<div style="left:1270px;top:258px;width:21px;height:18px;background:#ffff00"></div>
<div style="left:1293px;top:258px;width:21px;height:18px;background:#ff8080"></div>
<div style="left:1315px;top:258px;width:21px;height:18px;background:#800000"></div>
<div class="grp" style="left:1153px;top:279px;width:188px;height:286px;"></div>
<div class="ck" style="left:1158px;top:285px"></div>
<div class="t" style="left:1176.5px;top:284px;font-size:12px;letter-spacing:-0.29px;">Use default param</div>
<div style="left:1156px;top:301px;width:106px;height:16px;border:1px solid;border-color:#a0a0a0 #fff #fff #a0a0a0"></div>
<div class="t" style="left:1157px;top:302px;font-size:12px;letter-spacing:-0.305px;">Current pen</div>
<div class="ed" style="left:1266px;top:301px;width:69px;height:17px;background:#f0f0f0;"><span style="position:absolute;left:3px;top:0;line-height:16px;letter-spacing:-0.65px;color:#000">0</span></div>
<div style="left:1156px;top:322px;width:106px;height:16px;border:1px solid;border-color:#a0a0a0 #fff #fff #a0a0a0"></div>
<div class="t" style="left:1157px;top:323px;font-size:12px;letter-spacing:-0.41px;">Mark Loop</div>
<div class="ed" style="left:1266px;top:322px;width:69px;height:17px;background:#fff;"><span style="position:absolute;left:3px;top:0;line-height:16px;letter-spacing:-0.65px;color:#000">1</span></div>
<div style="left:1318px;top:325px;width:16px;height:6px;background:#f0f0f0;border:1px solid;border-color:#fff #696969 #696969 #fff"></div>
<div style="left:1318px;top:331px;width:16px;height:6px;background:#f0f0f0;border:1px solid;border-color:#fff #696969 #696969 #fff"></div>
<div style="left:1324px;top:327px;width:3px;height:1px;background:#000"></div>
<div style="left:1324px;top:333px;width:3px;height:1px;background:#000"></div>
<div style="left:1156px;top:342.5px;width:106px;height:16px;border:1px solid;border-color:#a0a0a0 #fff #fff #a0a0a0"></div>
<div class="t" style="left:1157px;top:343.5px;font-size:12px;letter-spacing:-0.365px;">Speed(mm/s)</div>
<div class="ed" style="left:1266px;top:342.5px;width:69px;height:17px;background:#fff;"><span style="position:absolute;left:3px;top:0;line-height:16px;letter-spacing:-0.65px;color:#000">300</span></div>
<div style="left:1318px;top:345.5px;width:16px;height:6px;background:#f0f0f0;border:1px solid;border-color:#fff #696969 #696969 #fff"></div>
<div style="left:1318px;top:351.5px;width:16px;height:6px;background:#f0f0f0;border:1px solid;border-color:#fff #696969 #696969 #fff"></div>
<div style="left:1324px;top:347.5px;width:3px;height:1px;background:#000"></div>
<div style="left:1324px;top:353.5px;width:3px;height:1px;background:#000"></div>
<div style="left:1156px;top:363.5px;width:106px;height:16px;border:1px solid;border-color:#a0a0a0 #fff #fff #a0a0a0"></div>
<div class="t" style="left:1157px;top:364.5px;font-size:12px;letter-spacing:-0.202px;">Current(A)</div>
<div class="ed" style="left:1266px;top:363.5px;width:69px;height:17px;background:#fff;"><span style="position:absolute;left:3px;top:0;line-height:16px;letter-spacing:-0.65px;color:#000">1</span></div>
<div style="left:1318px;top:366.5px;width:16px;height:6px;background:#f0f0f0;border:1px solid;border-color:#fff #696969 #696969 #fff"></div>
<div style="left:1318px;top:372.5px;width:16px;height:6px;background:#f0f0f0;border:1px solid;border-color:#fff #696969 #696969 #fff"></div>
<div style="left:1324px;top:368.5px;width:3px;height:1px;background:#000"></div>
<div style="left:1324px;top:374.5px;width:3px;height:1px;background:#000"></div>
<div style="left:1156px;top:384.5px;width:106px;height:16px;border:1px solid;border-color:#a0a0a0 #fff #fff #a0a0a0"></div>
<div class="t" style="left:1157px;top:385.5px;font-size:12px;letter-spacing:-0.526px;">Frequency(KHz)</div>
<div class="ed" style="left:1266px;top:384.5px;width:69px;height:17px;background:#fff;"><span style="position:absolute;left:3px;top:0;line-height:16px;letter-spacing:-0.65px;color:#000">10</span></div>
<div style="left:1318px;top:387.5px;width:16px;height:6px;background:#f0f0f0;border:1px solid;border-color:#fff #696969 #696969 #fff"></div>
<div style="left:1318px;top:393.5px;width:16px;height:6px;background:#f0f0f0;border:1px solid;border-color:#fff #696969 #696969 #fff"></div>
<div style="left:1324px;top:389.5px;width:3px;height:1px;background:#000"></div>
<div style="left:1324px;top:395.5px;width:3px;height:1px;background:#000"></div>
<div style="left:1156px;top:405.5px;width:106px;height:16px;border:1px solid;border-color:#a0a0a0 #fff #fff #a0a0a0"></div>
<div class="t" style="left:1157px;top:406.5px;font-size:12px;letter-spacing:-0.373px;">Q Pulse Width(us)</div>
<div class="ed" style="left:1266px;top:405.5px;width:69px;height:17px;background:#fff;"><span style="position:absolute;left:3px;top:0;line-height:16px;letter-spacing:-0.65px;color:#000">16</span></div>
<div style="left:1318px;top:408.5px;width:16px;height:6px;background:#f0f0f0;border:1px solid;border-color:#fff #696969 #696969 #fff"></div>
<div style="left:1318px;top:414.5px;width:16px;height:6px;background:#f0f0f0;border:1px solid;border-color:#fff #696969 #696969 #fff"></div>
<div style="left:1324px;top:410.5px;width:3px;height:1px;background:#000"></div>
<div style="left:1324px;top:416.5px;width:3px;height:1px;background:#000"></div>
<div style="left:1156px;top:426.5px;width:106px;height:16px;border:1px solid;border-color:#a0a0a0 #fff #fff #a0a0a0"></div>
<div class="t" style="left:1157px;top:427.5px;font-size:12px;letter-spacing:-0.342px;">Laser On TC(us)</div>
<div class="ed" style="left:1266px;top:426.5px;width:69px;height:17px;background:#fff;"><span style="position:absolute;left:3px;top:0;line-height:16px;letter-spacing:-0.65px;color:#000">200</span></div>
<div style="left:1318px;top:429.5px;width:16px;height:6px;background:#f0f0f0;border:1px solid;border-color:#fff #696969 #696969 #fff"></div>
<div style="left:1318px;top:435.5px;width:16px;height:6px;background:#f0f0f0;border:1px solid;border-color:#fff #696969 #696969 #fff"></div>
<div style="left:1324px;top:431.5px;width:3px;height:1px;background:#000"></div>
<div style="left:1324px;top:437.5px;width:3px;height:1px;background:#000"></div>
<div style="left:1156px;top:447.5px;width:106px;height:16px;border:1px solid;border-color:#a0a0a0 #fff #fff #a0a0a0"></div>
<div class="t" style="left:1157px;top:448.5px;font-size:12px;letter-spacing:-0.181px;">Laser Off TC(us)</div>
<div class="ed" style="left:1266px;top:447.5px;width:69px;height:17px;background:#fff;"><span style="position:absolute;left:3px;top:0;line-height:16px;letter-spacing:-0.65px;color:#000">100</span></div>
<div style="left:1318px;top:450.5px;width:16px;height:6px;background:#f0f0f0;border:1px solid;border-color:#fff #696969 #696969 #fff"></div>
<div style="left:1318px;top:456.5px;width:16px;height:6px;background:#f0f0f0;border:1px solid;border-color:#fff #696969 #696969 #fff"></div>
<div style="left:1324px;top:452.5px;width:3px;height:1px;background:#000"></div>
<div style="left:1324px;top:458.5px;width:3px;height:1px;background:#000"></div>
<div style="left:1156px;top:468.5px;width:106px;height:16px;border:1px solid;border-color:#a0a0a0 #fff #fff #a0a0a0"></div>
<div class="t" style="left:1157px;top:469.5px;font-size:12px;letter-spacing:-0.412px;">End TC(us)</div>
<div class="ed" style="left:1266px;top:468.5px;width:69px;height:17px;background:#fff;"><span style="position:absolute;left:3px;top:0;line-height:16px;letter-spacing:-0.65px;color:#000">300</span></div>
<div style="left:1318px;top:471.5px;width:16px;height:6px;background:#f0f0f0;border:1px solid;border-color:#fff #696969 #696969 #fff"></div>
<div style="left:1318px;top:477.5px;width:16px;height:6px;background:#f0f0f0;border:1px solid;border-color:#fff #696969 #696969 #fff"></div>
<div style="left:1324px;top:473.5px;width:3px;height:1px;background:#000"></div>
<div style="left:1324px;top:479.5px;width:3px;height:1px;background:#000"></div>
<div style="left:1156px;top:489.5px;width:106px;height:16px;border:1px solid;border-color:#a0a0a0 #fff #fff #a0a0a0"></div>
<div class="t" style="left:1157px;top:490.5px;font-size:12px;letter-spacing:-0.367px;">Polygon TC(us)</div>
<div class="ed" style="left:1266px;top:489.5px;width:69px;height:17px;background:#fff;"><span style="position:absolute;left:3px;top:0;line-height:16px;letter-spacing:-0.65px;color:#000">100</span></div>
<div style="left:1318px;top:492.5px;width:16px;height:6px;background:#f0f0f0;border:1px solid;border-color:#fff #696969 #696969 #fff"></div>
<div style="left:1318px;top:498.5px;width:16px;height:6px;background:#f0f0f0;border:1px solid;border-color:#fff #696969 #696969 #fff"></div>
<div style="left:1324px;top:494.5px;width:3px;height:1px;background:#000"></div>
<div style="left:1324px;top:500.5px;width:3px;height:1px;background:#000"></div>
<div class="ck" style="left:1158px;top:542px"></div>
<div class="t" style="left:1176px;top:540.5px;font-size:12px;letter-spacing:-1.5px;">CW</div>
<div class="btn" style="left:1210px;top:538px;width:37px;height:21px;"><svg width="32" height="12" style="position:absolute;left:2px;top:4px" viewBox="0 0 32 12"><g fill="none" stroke="#e00000" stroke-width="1.100"><ellipse cx="6" cy="6" rx="4.500" ry="5"/><ellipse cx="12.500" cy="6" rx="4.500" ry="5"/><ellipse cx="19" cy="6" rx="4.500" ry="5"/><ellipse cx="25.500" cy="6" rx="4.500" ry="5"/></g></svg></div>
<div class="btn" style="left:1254px;top:538px;width:82px;height:21px;"><span class="bl" style="line-height:18px;letter-spacing:-0.6px">Advance...</span></div>
<div style="left:1153px;top:570px;width:72px;height:18px;border:1px solid;border-color:#fff #696969 #696969 #fff;box-shadow:inset -1px -1px 0 #a0a0a0"></div>
<div class="t" style="left:1157px;top:570.5px;font-size:12px;letter-spacing:-0.569px;">Param name</div>
<div style="left:1226px;top:571px;width:115px;height:17px;border:1px solid;border-color:#a0a0a0 #fff #fff #a0a0a0"></div>
<div class="t" style="left:1228px;top:571px;font-size:12px;letter-spacing:-0.288px;">Default</div>
<div class="btn" style="left:1153px;top:589px;width:189px;height:24px;"><span class="bl" style="line-height:21px;letter-spacing:-0.18px">Select param from library</span></div>
<div class="btn" style="left:1153px;top:614px;width:189px;height:23px;"><span class="bl" style="line-height:20px;letter-spacing:-0.17px">Apply to <u>d</u>efault</span></div>
<div class="pink" style="left:1144px;top:316px;width:202px;height:112px;"></div>
<div class="btn" style="left:269px;top:964px;width:67px;height:39px;"><span class="bl" style="line-height:36px;letter-spacing:-0.1px">Light(F1)</span></div>
<div class="btnd" style="left:339px;top:964px;width:67px;height:39px;"><span class="bl" style="line-height:36px;letter-spacing:-0.1px">Mark(F2)</span></div>
<div class="ck" style="left:410px;top:965px"></div>
<div class="t" style="left:428.5px;top:964px;font-size:12px;letter-spacing:-0.325px;">[<u>C</u>]Continuous</div>
<div class="ck" style="left:410px;top:988px"><svg width="13" height="13" style="position:absolute;left:-1px;top:-1px" shape-rendering="crispEdges"><path d="M3 5h1v3h-1zM4 6h1v3h-1zM5 7h1v3h-1zM6 6h1v3h-1zM7 5h1v3h-1zM8 4h1v3h-1zM9 3h1v3h-1z" fill="#000"/></svg></div>
<div class="t" style="left:428.5px;top:987px;font-size:12px;letter-spacing:-0.354px;">[<u>S</u>]Mark Selectec</div>
<div class="t" style="left:521.5px;top:965px;font-size:12px;letter-spacing:-0.5px;">Part</div>
<div class="t" style="left:521.5px;top:984.5px;font-size:12px;letter-spacing:-0.377px;width:40px;overflow:hidden">Total nu</div>
<div class="ed" style="left:571px;top:962px;width:51px;height:17px;background:#fff;"><span style="position:absolute;left:3px;top:0;line-height:16px;letter-spacing:-0.65px;color:#000">1</span></div>
<div class="ed" style="left:571px;top:983px;width:51px;height:17px;background:#fff;"><span style="position:absolute;left:3px;top:0;line-height:16px;letter-spacing:-0.65px;color:#000">0</span></div>
<div class="btn" style="left:625px;top:962px;width:22px;height:21px;"><span class="bl" style="line-height:18px;letter-spacing:-0.3px">R</span></div>
<div class="btn" style="left:648px;top:985px;width:67px;height:24px;"><span class="bl" style="line-height:21px;letter-spacing:-0.2px">Param(F3)</span></div>
<div class="ed" style="left:717px;top:962px;width:88px;height:18px;background:#f0f0f0;"><span style="position:absolute;left:3px;top:0;line-height:17px;letter-spacing:-0.65px;color:#000">00:00:02.957</span></div>
<div class="ed" style="left:717px;top:986px;width:88px;height:18px;background:#f0f0f0;"><span style="position:absolute;left:3px;top:0;line-height:17px;letter-spacing:-0.65px;color:#000">00:00:03.444</span></div>
<div class="ck" style="left:809px;top:966px"></div>
<div class="t" style="left:827px;top:964.5px;font-size:12px;letter-spacing:-0.422px;">Show contour</div>
<div class="ck" style="left:809px;top:989px"></div>
<div class="t" style="left:827px;top:987.5px;font-size:12px;letter-spacing:-0.413px;">Continue mode</div>
<div style="left:3px;top:1010px;width:1358px;height:1px;background:#a0a0a0"></div>
<div style="left:3px;top:1011px;width:1358px;height:1px;background:#fff"></div>
<div class="t" style="left:6px;top:1015px;font-size:12px;letter-spacing:-0.261px;">Pick: 1Pick object object:Hatch Size: X16.394 Y3.000</div>
<div style="left:1061px;top:1014px;width:105px;height:17px;border:1px solid;border-color:#a0a0a0 #fff #fff #a0a0a0;overflow:hidden"></div>
<div class="t" style="left:1066px;top:1015px;font-size:12px;letter-spacing:-0.586px;">5.678,16.588</div>
<div style="left:1169px;top:1014px;width:56px;height:17px;border:1px solid;border-color:#a0a0a0 #fff #fff #a0a0a0;overflow:hidden"></div>
<div class="t" style="left:1171px;top:1015px;font-size:12px;letter-spacing:-0.534px;">Snap Grid:</div>
<div style="left:1227px;top:1014px;width:56px;height:17px;border:1px solid;border-color:#a0a0a0 #fff #fff #a0a0a0;overflow:hidden"></div>
<div class="t" style="left:1229px;top:1015px;font-size:12px;letter-spacing:-0.276px;">Guildline:(</div>
<div style="left:1285px;top:1014px;width:56px;height:17px;border:1px solid;border-color:#a0a0a0 #fff #fff #a0a0a0;overflow:hidden"></div>
<div class="t" style="left:1287px;top:1015px;font-size:12px;letter-spacing:-0.222px;">Object:On</div>
<svg style="position:absolute;left:1346px;top:1017px;" width="14" height="14" viewBox="0 0 14 14"><path d="M13 1L1 13M13 5L5 13M13 9L9 13" stroke="#a0a0a0" stroke-width="1.300"/></svg>
</body></html>
